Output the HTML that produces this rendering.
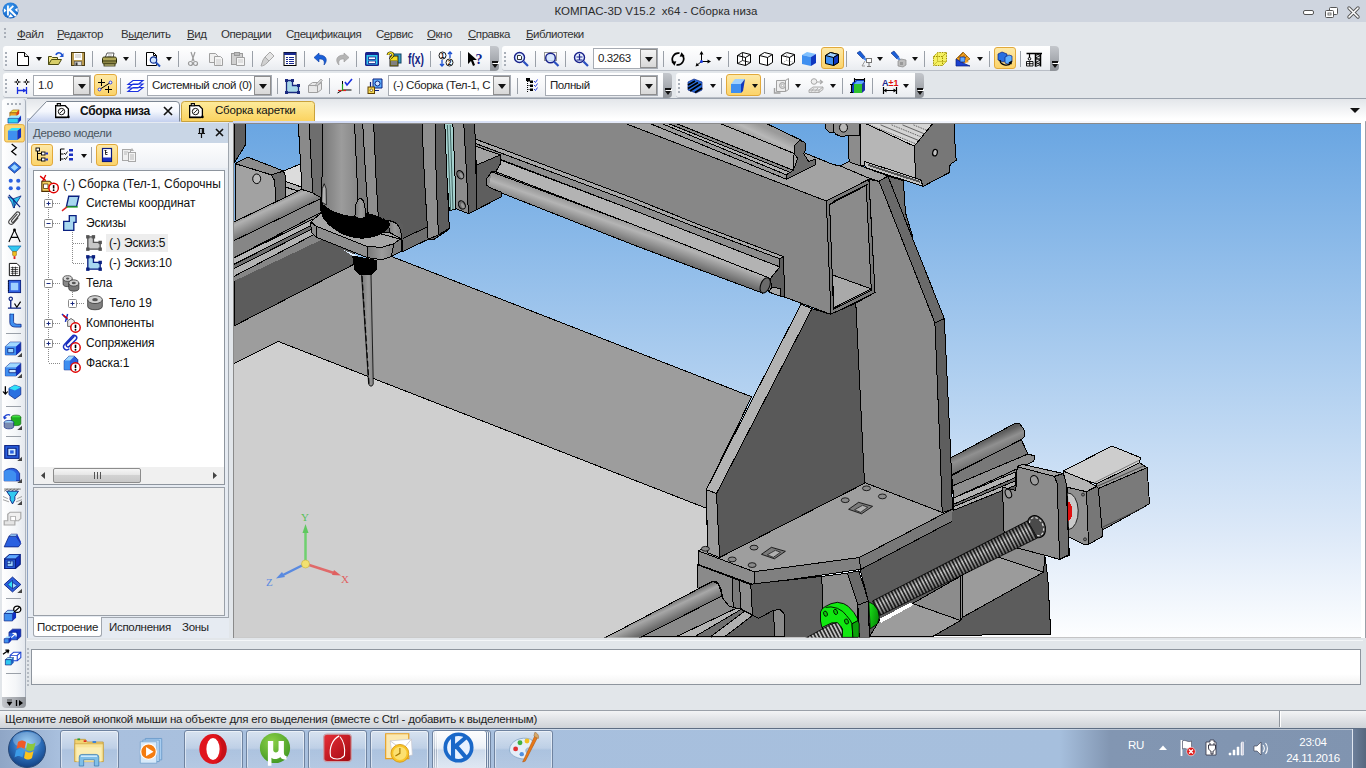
<!DOCTYPE html>
<html lang="ru">
<head>
<meta charset="utf-8">
<title>КОМПАС-3D V15.2 x64 - Сборка низа</title>
<style>
*{box-sizing:border-box;margin:0;padding:0}
html,body{width:1366px;height:768px;overflow:hidden;background:#e2e6ea;font-family:"Liberation Sans","DejaVu Sans",sans-serif;font-size:12px;color:#1a1a1a}
.abs{position:absolute}
#app{position:absolute;left:0;top:0;width:1366px;height:768px;overflow:hidden;background:#e2e6ea}
#title{left:0;top:0;width:1366px;height:22px;background:#cfd5df}
#title .t{left:0;width:1312px;top:5px;text-align:center;font-size:11.5px;color:#2b2b2b;white-space:pre}
#menu{left:0;top:22px;width:1366px;height:24px;background:#e2e6ea}
#menu span{position:absolute;top:6px;font-size:11.5px;color:#333;white-space:nowrap;letter-spacing:-0.45px}
#menu u{text-decoration:underline;text-underline-offset:1px}
.tb{position:absolute;height:25px;background:linear-gradient(#ffffff,#f6f7f9 55%,#e9ecf0);border-radius:3px 0 0 3px;border-bottom:1px solid #b9bec6}
.cap{position:absolute;width:9px;height:25px;background:linear-gradient(#c4c7cc,#8f9399);border-radius:0 4px 4px 0}
.cap:after{content:"";position:absolute;left:2px;top:18px;border:3px solid transparent;border-top:4px solid #111;width:0;height:0}
.cap:before{content:"";position:absolute;left:2px;top:15px;width:6px;height:2px;background:#111;box-shadow:1px 1px 0 #fff}
.grip{position:absolute;width:2px;height:14px;top:6px;background:repeating-linear-gradient(#a9afb8 0 2px,transparent 2px 4px)}
.sep{position:absolute;width:1px;height:16px;top:5px;background:#9aa0a8}
.dd{position:absolute;width:0;height:0;border:3px solid transparent;border-top:4px solid #111;top:11px}
.combo{position:absolute;height:21px;top:2px;background:#fff;border:1px solid #a6abb3;font-size:11.5px;letter-spacing:-.4px;line-height:19px;padding-left:4px;white-space:nowrap;overflow:hidden;color:#222}
.combo i{position:absolute;right:0;top:0;width:17px;height:19px;background:linear-gradient(#f4f4f4,#d8d8d8);border:1px solid #8e8e8e}
.combo i:after{content:"";position:absolute;left:4px;top:7px;border:4px solid transparent;border-top:5px solid #111}
.hl{position:absolute;top:1px;height:22px;background:linear-gradient(#fde9a8,#fbd36a);border:1px solid #e2a93a;border-radius:3px}
svg{position:absolute;overflow:visible}
</style>
</head>
<body>
<div id="app">
<div id="title" class="abs">
<svg style="left:2px;top:2px" width="17" height="17" viewBox="0 0 18 18"><defs><radialGradient id="kg" cx=".45" cy=".35" r=".75"><stop offset="0" stop-color="#3f9df0"/><stop offset=".7" stop-color="#1a6fd0"/><stop offset="1" stop-color="#0d4fa8"/></radialGradient></defs><circle cx="9" cy="9" r="8.500" fill="url(#kg)"/><path d="M6.300 3.800v10.400" stroke="#fff" stroke-width="1.900" fill="none"/><path d="M6.500 9.500L12 4.200" stroke="#fff" stroke-width="1.900" fill="none"/><path d="M8 8.200L14.800 14.800" stroke="#fff" stroke-width="2.300" fill="none"/><path d="M2 6.500L4.800 9L2 11.500zM16.500 6L13.500 8.300L16.500 10.800zM6.500 16.500L9 12.800L11.800 16z" fill="#fff"/></svg>
<div class="abs t">КОМПАС-3D V15.2  x64 - Сборка низа</div>
<svg style="left:1302px;top:7px" width="60" height="12" viewBox="0 0 60 12"><rect x="1.500" y="3.500" width="10" height="4" rx="1.500" fill="#fff" stroke="#555"/><rect x="27.500" y="0.500" width="8" height="7" rx="1" fill="#fff" stroke="#555"/><rect x="23.500" y="3.500" width="8" height="7" rx="1" fill="#fff" stroke="#555"/><rect x="26" y="6" width="3" height="2" fill="none" stroke="#555" stroke-width=".8"/><path d="M47 1l9 9M56 1l-9 9" stroke="#555" stroke-width="3.400" stroke-linecap="round"/><path d="M47 1l9 9M56 1l-9 9" stroke="#fff" stroke-width="1.600" stroke-linecap="round"/></svg>
</div>
<div id="menu" class="abs">
<div class="grip" style="left:4px;top:6px;height:10px"></div>
<span style="left:17px"><u>Ф</u>айл</span>
<span style="left:57px"><u>Р</u>едактор</span>
<span style="left:121px">В<u>ы</u>делить</span>
<span style="left:187px"><u>В</u>ид</span>
<span style="left:221px">Опера<u>ц</u>ии</span>
<span style="left:286px">С<u>п</u>ецификация</span>
<span style="left:376px">С<u>е</u>рвис</span>
<span style="left:427px"><u>О</u>кно</span>
<span style="left:468px"><u>С</u>правка</span>
<span style="left:526px"><u>Б</u>иблиотеки</span>
</div>
<div class="tb" style="left:3px;top:46px;width:487px"></div><div class="cap" style="left:490px;top:46px"></div>
<div class="grip" style="left:5px;top:52px"></div>
<svg style="left:15px;top:51px" width="16" height="16" viewBox="0 0 16 16"><path d="M2.5 1.5h7l4 4v9h-11z" fill="#fff" stroke="#000"/><path d="M9.5 1.5v4h4" fill="#e8e8e8" stroke="#000"/></svg>
<div class="dd" style="left:36px;top:57px"></div>
<svg style="left:47px;top:51px" width="16" height="16" viewBox="0 0 16 16"><path d="M1.5 13.5v-8h3l1 1h5v2" fill="#f4e88c" stroke="#4a4a10"/><path d="M1.5 13.5l3-5h10l-3 5z" fill="#d8cf6a" stroke="#4a4a10"/><path d="M9 4c1-3 5-3 6 0" fill="none" stroke="#1a4fd0" stroke-width="1.6"/><path d="M16.5 2v4h-4z" fill="#1a4fd0"/></svg>
<svg style="left:70px;top:51px" width="16" height="16" viewBox="0 0 16 16"><rect x="1.5" y="1.5" width="13" height="13" fill="#b89a50" stroke="#4a3a10"/><rect x="4" y="2" width="8" height="7" fill="#fff"/><path d="M5 4h6M5 6h6" stroke="#bbb"/><rect x="4.5" y="10.5" width="7" height="4" fill="#ddd" stroke="#555" stroke-width=".6"/><rect x="5.5" y="11.5" width="2" height="3" fill="#333"/></svg>
<div class="sep" style="left:92px;top:51px"></div>
<svg style="left:101px;top:51px" width="16" height="16" viewBox="0 0 16 16"><path d="M4 7l2-5h7l-1 5z" fill="#fff" stroke="#333" stroke-width=".8"/><path d="M7 4h4M6.5 5.5h4" stroke="#999" stroke-width=".7"/><path d="M1.5 7.5c0-1 1-1.5 2-1.5h10c1 0 2 .5 2 1.500v4c0 1-1 1.500-2 1.500h-10c-1 0-2-.5-2-1.500z" fill="#b0a85a" stroke="#2a2a08"/><path d="M2 10h13" stroke="#2a2a08"/><path d="M2 12h13" stroke="#6a6430"/><rect x="3" y="13" width="11" height="2" fill="#d8d08a" stroke="#2a2a08" stroke-width=".8"/></svg>
<div class="dd" style="left:123px;top:57px"></div>
<div class="sep" style="left:135px;top:51px"></div>
<svg style="left:145px;top:51px" width="16" height="16" viewBox="0 0 16 16"><path d="M1.500 1.500h7l3 3v10h-10z" fill="#fff" stroke="#000"/><path d="M8.500 1.500v3h3" fill="none" stroke="#000"/><circle cx="8.500" cy="9" r="3.200" fill="#cfe4ff" stroke="#103090" stroke-width="1.200"/><path d="M11 11.500l4 4" stroke="#2050c0" stroke-width="2"/></svg>
<div class="dd" style="left:166px;top:57px"></div>
<div class="sep" style="left:178px;top:51px"></div>
<svg style="left:185px;top:51px" width="16" height="16" viewBox="0 0 16 16"><path d="M6 1l3 9M10 1l-3 9" stroke="#9a9a9a" stroke-width="1.200" fill="none"/><circle cx="5.500" cy="12.500" r="2" fill="none" stroke="#9a9a9a" stroke-width="1.200"/><circle cx="10.500" cy="12.500" r="2" fill="none" stroke="#9a9a9a" stroke-width="1.200"/></svg>
<svg style="left:208px;top:51px" width="16" height="16" viewBox="0 0 16 16"><path d="M1.500 2.500h6l2 2v7h-8z" fill="#f0f0f0" stroke="#a0a0a0"/><path d="M6.500 5.500h6l2 2v7h-8z" fill="#f4f4f4" stroke="#a0a0a0"/><path d="M8 9h5M8 11h5M8 13h5" stroke="#c0c0c0" stroke-width=".8"/></svg>
<svg style="left:230px;top:51px" width="16" height="16" viewBox="0 0 16 16"><rect x="1.500" y="2.500" width="11" height="11" fill="#d0d0d0" stroke="#9a9a9a"/><rect x="4.500" y="1.500" width="5" height="3" fill="#bbb" stroke="#999"/><path d="M6.500 6.500h8v8h-8z" fill="#f4f4f4" stroke="#a0a0a0"/><path d="M8 9h5M8 11h5" stroke="#c0c0c0" stroke-width=".8"/></svg>
<div class="sep" style="left:252px;top:51px"></div>
<svg style="left:260px;top:51px" width="16" height="16" viewBox="0 0 16 16"><path d="M10 1l4 4-5 5-4-4z" fill="#e4e4e4" stroke="#a8a8a8"/><path d="M5 6l4 4-2 2c-2 2-4 3-6 3 1-2 1-4 2-6z" fill="#d0d0d0" stroke="#a8a8a8"/></svg>
<svg style="left:282px;top:51px" width="16" height="16" viewBox="0 0 16 16"><rect x="2" y="1.500" width="12" height="13" fill="#fff" stroke="#000"/><rect x="2" y="1.500" width="12" height="2.500" fill="#1a2a90"/><path d="M4 6.500h2M7 6.500h5M4 8.500h2M7 8.500h5M4 10.500h2M7 10.500h5M4 12.500h2M7 12.500h5" stroke="#1a2a90" stroke-width="1.200"/></svg>
<div class="sep" style="left:304px;top:51px"></div>
<svg style="left:313px;top:51px" width="16" height="16" viewBox="0 0 16 16"><path d="M6 2l-5 4.500 5 4.500v-3c4 0 6 1 5 6 4-4 3-10-5-10z" fill="#1a5fd8" stroke="#0a3aa0" stroke-width=".6"/></svg>
<svg style="left:334px;top:51px" width="16" height="16" viewBox="0 0 16 16"><path d="M10 2l5 4.500-5 4.500v-3c-4 0-6 1-5 6-4-4-3-10 5-10z" fill="#b4b4b4" stroke="#999" stroke-width=".6"/></svg>
<div class="sep" style="left:356px;top:51px"></div>
<svg style="left:364px;top:51px" width="16" height="16" viewBox="0 0 16 16"><rect x="1" y="1" width="14" height="14" rx="1.500" fill="#18208a"/><rect x="2.500" y="4" width="11" height="9.500" fill="#30c8f0"/><rect x="4.500" y="6" width="7" height="2.500" fill="#fff" stroke="#18208a" stroke-width=".8"/><rect x="4.500" y="10" width="7" height="2.500" fill="#fff" stroke="#18208a" stroke-width=".8"/></svg>
<svg style="left:386px;top:51px" width="16" height="16" viewBox="0 0 16 16"><rect x="7" y="3" width="8" height="9" fill="#38a0c8" stroke="#104060"/><rect x="4" y="5" width="8" height="10" fill="#f4e020" stroke="#222"/><path d="M5 10h6v4h-6zM7 10v4M9 10v4M5 12h6" stroke="#222" fill="#fff" stroke-width=".7"/><path d="M2 4c0-3 5-3 5 0 0 2-2.500 2-2.500 4" fill="none" stroke="#000" stroke-width="2.600"/><path d="M2 4c0-3 5-3 5 0 0 2-2.500 2-2.500 4" fill="none" stroke="#f4e020" stroke-width="1.400"/></svg>
<svg style="left:408px;top:51px" width="16" height="16" viewBox="0 0 16 16"><text x="0" y="13" font-family="Liberation Sans,sans-serif" font-size="14" font-weight="bold" fill="#102080" textLength="16" lengthAdjust="spacingAndGlyphs">f(x)</text></svg>
<div class="sep" style="left:430px;top:51px"></div>
<svg style="left:438px;top:51px" width="16" height="16" viewBox="0 0 16 16"><circle cx="4.500" cy="4.500" r="3.500" fill="#fff" stroke="#000" stroke-width=".9"/><circle cx="11.500" cy="11.500" r="3.500" fill="#fff" stroke="#000" stroke-width=".9"/><text x="2.800" y="7" font-size="6.500" font-family="Liberation Sans,sans-serif" font-weight="bold" fill="#000">1</text><text x="9.800" y="14" font-size="6.500" font-family="Liberation Sans,sans-serif" font-weight="bold" fill="#000">2</text><path d="M12 1v6M10 3l2-2 2 2" stroke="#1a4fd0" stroke-width="1.300" fill="none"/><path d="M4 9v6M2 13l2 2 2-2" stroke="#1a4fd0" stroke-width="1.300" fill="none"/></svg>
<div class="sep" style="left:460px;top:51px"></div>
<svg style="left:467px;top:51px" width="16" height="16" viewBox="0 0 16 16"><path d="M1 1v12l3-3 2 5 2-1-2-5h4z" fill="#000"/><text x="8.500" y="13" font-size="14" font-weight="bold" font-family="Liberation Serif,serif" fill="#10208a">?</text></svg>
<div class="tb" style="left:502px;top:46px;width:548px"></div><div class="cap" style="left:1050px;top:46px"></div>
<div class="grip" style="left:504px;top:52px"></div>
<svg style="left:513px;top:51px" width="16" height="16" viewBox="0 0 16 16"><circle cx="6.500" cy="6.500" r="5" fill="#dcebff" stroke="#18208a" stroke-width="1.400"/><path d="M10.500 10.500l4.500 4.500" stroke="#2a50c0" stroke-width="2.200"/><path d="M4.500 4.500h3l1 1v3h-4z" fill="#fff" stroke="#000" stroke-width=".8"/></svg>
<div class="sep" style="left:535px;top:51px"></div>
<svg style="left:543px;top:51px" width="16" height="16" viewBox="0 0 16 16"><rect x="1.500" y="1.500" width="12" height="8" fill="none" stroke="#333" stroke-dasharray="1 1"/><circle cx="7.500" cy="7" r="4.800" fill="#cfe2ff" fill-opacity=".8" stroke="#18208a" stroke-width="1.400"/><path d="M11 10.500l4.500 4.500" stroke="#2a50c0" stroke-width="2.200"/></svg>
<div class="sep" style="left:565px;top:51px"></div>
<svg style="left:573px;top:51px" width="16" height="16" viewBox="0 0 16 16"><circle cx="6.500" cy="6.500" r="5" fill="#e8f1ff" stroke="#18208a" stroke-width="1.400"/><path d="M10.500 10.500l4.500 4.500" stroke="#2a50c0" stroke-width="2.200"/><path d="M3.500 6h6M6.500 3v6M3.500 9h6" stroke="#18208a" stroke-width="1.200"/></svg>
<div class="combo" style="left:593px;top:48px;width:65px">0.3263<i></i></div>
<div class="sep" style="left:663px;top:51px"></div>
<svg style="left:670px;top:51px" width="16" height="16" viewBox="0 0 16 16"><path d="M9.500 2.200A6 6 0 0 0 3.800 12" fill="none" stroke="#000" stroke-width="1.700"/><path d="M1.300 10.800l5 -.6-1.800 4.600z" fill="#000"/><path d="M6.500 13.800A6 6 0 0 0 12.200 4" fill="none" stroke="#000" stroke-width="1.700"/><path d="M14.700 5.200l-5 .6 1.800-4.600z" fill="#000"/></svg>
<svg style="left:695px;top:51px" width="16" height="16" viewBox="0 0 16 16"><path d="M6.500 1.500v9M6.500 10.500h8M6.500 10.500l-5 4" stroke="#000" stroke-width="1" fill="none"/><path d="M6.500 0l-2 3.500h4zM16 10.500l-3.500-2v4zM0.500 15.500l1.200-3.800 2.300 2.800z" fill="#000"/><circle cx="6.500" cy="10.500" r="1.500" fill="#1a3ae0"/></svg>
<div class="dd" style="left:716px;top:57px"></div>
<div class="sep" style="left:728px;top:51px"></div>
<svg style="left:736px;top:51px" width="16" height="16" viewBox="0 0 16 16"><path d="M1.500 4.500l5-3 8 2v8l-5 3-8-2zM1.500 4.500l8 2 5-3M9.500 6.500v8" fill="#fff" stroke="#000"/><path d="M6.500 1.500v8l-5 3M6.500 9.500l8 2" fill="none" stroke="#000" stroke-width=".8"/></svg>
<svg style="left:758px;top:51px" width="16" height="16" viewBox="0 0 16 16"><path d="M1.500 4.500l5-3 8 2v8l-5 3-8-2zM1.500 4.500l8 2 5-3M9.500 6.500v8" fill="#fff" stroke="#000"/></svg>
<svg style="left:780px;top:51px" width="16" height="16" viewBox="0 0 16 16"><path d="M1.500 4.500l5-3 8 2v8l-5 3-8-2zM1.500 4.500l8 2 5-3M9.500 6.500v8" fill="#fff" stroke="#000"/><path d="M6.500 1.500v8l-5 3M6.500 9.500l8 2" fill="none" stroke="#888" stroke-width=".8" stroke-dasharray="1 1"/></svg>
<svg style="left:801px;top:51px" width="16" height="16" viewBox="0 0 16 16"><path d="M1 4l5-3 9 2-5 3z" fill="#7fc0ff"/><path d="M1 4l9 2v9l-9-2z" fill="#3f8ff0"/><path d="M10 6l5-3v9l-5 3z" fill="#1038c0"/></svg>
<div class="hl" style="left:821px;top:47px;width:23px"></div>
<svg style="left:824px;top:51px" width="16" height="16" viewBox="0 0 16 16"><path d="M1.500 4.500l5-3 8 2v8l-5 3-8-2z" fill="#3f8ff0" stroke="#000"/><path d="M1.500 4.500l5-3 8 2-5 3z" fill="#9fd0ff" stroke="#000"/><path d="M9.500 6.500l5-3v8l-5 3z" fill="#1038c0" stroke="#000"/></svg>
<div class="sep" style="left:846px;top:51px"></div>
<svg style="left:856px;top:51px" width="16" height="16" viewBox="0 0 16 16"><path d="M1 2l3-2 5 6-2 2z" fill="#1a5fd8" stroke="#0a2a80" stroke-width=".6"/><path d="M7 8l2-2 2 3-1 1z" fill="#4a8af0"/><path d="M9 10l-3 5M6 15h3" stroke="#999" fill="none"/><rect x="10.500" y="7.500" width="5" height="4" fill="#fff" stroke="#777"/><path d="M13 11.500v4M11 15.500h4" stroke="#777"/></svg>
<div class="dd" style="left:877px;top:57px"></div>
<svg style="left:890px;top:51px" width="16" height="16" viewBox="0 0 16 16"><path d="M1 2l3-2 5 6-2 2z" fill="#1a5fd8" stroke="#0a2a80" stroke-width=".6"/><path d="M7 8l2-2 2 3-1 1z" fill="#4a8af0"/><path d="M8 10l3-2 5 1v5l-3 2-5-1z" fill="#bdbdbd" stroke="#888" stroke-width=".7"/><rect x="10" y="11" width="3" height="3" fill="#999"/></svg>
<div class="dd" style="left:912px;top:57px"></div>
<div class="sep" style="left:924px;top:51px"></div>
<svg style="left:932px;top:51px" width="16" height="16" viewBox="0 0 16 16"><path d="M1.500 5.500l4-4h9v9l-4 4h-9z" fill="#f4f060" stroke="#a09000" stroke-dasharray="1.500 1"/><path d="M1.500 5.500h9v9M10.500 5.500l4-4" fill="none" stroke="#a09000" stroke-dasharray="1.500 1"/><path d="M5.500 1.500v9h9M5.500 10.500l-4 4" fill="none" stroke="#c0b020" stroke-width=".7"/></svg>
<svg style="left:955px;top:51px" width="16" height="16" viewBox="0 0 16 16"><path d="M1 8l7-7 7 7-7 4z" fill="#f0a020" stroke="#805000" stroke-width=".7"/><path d="M3 7l5-5M5 8.500l5-5M7 10l5-5" stroke="#a86000" stroke-width=".8"/><path d="M1 8v7h14l-7-3z" fill="#1a40d0" stroke="#0a2080" stroke-width=".7"/><path d="M5 6h5v5h-5z" fill="#5fa8ff" stroke="#0a2080" stroke-width=".7"/><path d="M10 8.500l4 2.500-4 1z" fill="#f0a020"/></svg>
<div class="dd" style="left:977px;top:57px"></div>
<div class="sep" style="left:989px;top:51px"></div>
<div class="hl" style="left:994px;top:47px;width:22px"></div>
<svg style="left:997px;top:51px" width="16" height="16" viewBox="0 0 16 16"><path d="M1 3l4-2 5 2v6l-4 2-5-2z" fill="#2a70e0" stroke="#0a2080" stroke-width=".7"/><path d="M8 6l4-2 3 1v6l-4 2-3-1z" fill="#5fb0ff" stroke="#0a2080" stroke-width=".7"/><path d="M3 9c0 5 8 7 11 3" fill="none" stroke="#000" stroke-width="1.300"/><path d="M15 9.500l-.500 4-3-2z" fill="#000"/></svg>
<div class="sep" style="left:1020px;top:51px"></div>
<svg style="left:1026px;top:51px" width="16" height="16" viewBox="0 0 16 16"><path d="M0.500 2.500h15.500M9.500 2.500v13M14.500 2.500v13" stroke="#000" stroke-width="1.500" fill="none"/><path d="M9.500 2.500l5 2.200-5 2.200 5 2.200-5 2.200 5 2.200-5 2" stroke="#000" stroke-width=".9" fill="none"/><path d="M9.500 4.700l5-2.200M9.500 9.100l5-2.200M9.500 13.500l5-2.200" stroke="#000" stroke-width=".7"/><path d="M3.500 2.500v4" stroke="#000" stroke-width="1.200"/><circle cx="3.500" cy="7.800" r="1.300" fill="none" stroke="#000"/><path d="M0.500 10.500h6.500v4.500h-6.500zM3.700 10.500v4.500M0.500 12.700h6.500" fill="#fff" stroke="#000" stroke-width=".9"/></svg>
<div class="tb" style="left:3px;top:73px;width:660px"></div><div class="cap" style="left:663px;top:73px"></div>
<div class="grip" style="left:5px;top:79px"></div>
<svg style="left:14px;top:78px" width="16" height="16" viewBox="0 0 16 16"><path d="M3.500 1v6M0.500 4h6M12.500 1v6M9.500 4h6" stroke="#000" stroke-width="1"/><circle cx="3.500" cy="4" r="1.200" fill="#fff" stroke="#000" stroke-width=".8"/><circle cx="12.500" cy="4" r="1.200" fill="#fff" stroke="#000" stroke-width=".8"/><path d="M3.500 9v7M12.500 9v7M3.500 12.500h9" stroke="#1a30e0" stroke-width="1.300"/><path d="M12.500 12.500l-3.500-2v4z" fill="#1a30e0"/></svg>
<div class="combo" style="left:33px;top:75px;width:58px">1.0<i></i></div>
<div class="hl" style="left:94px;top:74px;width:23px"></div>
<svg style="left:97px;top:78px" width="16" height="16" viewBox="0 0 16 16"><path d="M4.500 1v7M1 4.500h7M11.500 8v7M8 11.500h7" stroke="#000" stroke-width="1"/><path d="M2.500 11.500l11-7" stroke="#000" stroke-width="1"/><circle cx="2.500" cy="11.500" r="1.400" fill="#fff" stroke="#1a30e0" stroke-width=".9"/><circle cx="13.500" cy="4.500" r="1.400" fill="#fff" stroke="#1a30e0" stroke-width=".9"/></svg>
<div class="sep" style="left:120px;top:78px"></div>
<svg style="left:127px;top:78px" width="16" height="16" viewBox="0 0 16 16"><path d="M1 6.500l5-4h10l-5 4zM1 10l5-4h10l-5 4zM1 13.500l5-4h10l-5 4z" fill="#fff" stroke="#1a30e0" stroke-width="1.100"/></svg>
<div class="combo" style="left:147px;top:75px;width:125px">Системный слой (0)<i></i></div>
<div class="sep" style="left:277px;top:78px"></div>
<svg style="left:284px;top:78px" width="16" height="16" viewBox="0 0 16 16"><path d="M2.500 2.500h6v5h6v7h-12z" fill="#a8d8e8" stroke="#1a2a80" stroke-width="1.300"/><rect x="1" y="1" width="3" height="3" fill="#1a2a80"/><rect x="1" y="13" width="3" height="3" fill="#1a2a80"/><rect x="13" y="13" width="3" height="3" fill="#1a2a80"/><rect x="13" y="6" width="3" height="3" fill="#1a2a80"/><rect x="7" y="1" width="3" height="3" fill="#1a2a80"/></svg>
<svg style="left:307px;top:78px" width="16" height="16" viewBox="0 0 16 16"><path d="M1.500 7.500l4-3h9v7l-4 3h-9zM1.500 7.500h9v7M10.500 7.500l4-3" fill="#e8e8e8" stroke="#a0a0a0"/><path d="M9 6l5-5 1.500 1.500-5 5-2 .5z" fill="#d0d0d0" stroke="#999" stroke-width=".7"/></svg>
<div class="sep" style="left:329px;top:78px"></div>
<svg style="left:337px;top:78px" width="16" height="16" viewBox="0 0 16 16"><path d="M5.500 3v9M5.500 12h9M5.500 12l-5 3" stroke="#000" stroke-width="1" fill="none"/><path d="M1 12.500h8" stroke="#e02020" stroke-width="1.200"/><path d="M5.500 6v7" stroke="#20a020" stroke-width="1.200"/><path d="M8 4l2 3 5-6" stroke="#1a30e0" stroke-width="1.600" fill="none"/></svg>
<div class="sep" style="left:359px;top:78px"></div>
<svg style="left:367px;top:78px" width="16" height="16" viewBox="0 0 16 16"><path d="M6 1h9v9h-9z" fill="#5fb0ff" stroke="#0a2080"/><circle cx="10.500" cy="5.500" r="2.500" fill="#cfe4ff" stroke="#0a2080"/><path d="M3.500 4v8.500h8.500" fill="none" stroke="#0a2080" stroke-width="1.200"/><rect x="1" y="9" width="6.500" height="6.500" fill="#f4d850" stroke="#604000"/><circle cx="4.300" cy="12.300" r="1.300" fill="#fff" stroke="#604000" stroke-width=".7"/></svg>
<div class="combo" style="left:388px;top:75px;width:123px">(-) Сборка (Тел-1, С<i></i></div>
<div class="sep" style="left:517px;top:78px"></div>
<svg style="left:525px;top:78px" width="16" height="16" viewBox="0 0 16 16"><path d="M2.500 1v14M2.500 3.500h4M2.500 7.500h4M2.500 11.500h4" stroke="#000" stroke-width="1" fill="none" stroke-dasharray="1 1"/><rect x="1" y="0" width="4" height="3" fill="#000"/><rect x="5" y="2.500" width="3" height="2.500" fill="#000"/><rect x="5" y="6.500" width="3" height="2.500" fill="#000"/><rect x="5" y="10.500" width="3" height="2.500" fill="#000"/><path d="M9 3l1.500 1.500 2-3M9 7l1.500 1.500 2-3M9 11l1.500 1.500 2-3" stroke="#1a30e0" fill="none" stroke-width=".9"/></svg>
<div class="combo" style="left:545px;top:75px;width:113px">Полный<i></i></div>
<div class="tb" style="left:676px;top:73px;width:239px"></div><div class="cap" style="left:915px;top:73px"></div>
<div class="grip" style="left:678px;top:79px"></div>
<svg style="left:687px;top:78px" width="16" height="16" viewBox="0 0 16 16"><path d="M1 4l6-3 8 3v8l-6 3-8-3z" fill="#2a70e0" stroke="#0a2080" stroke-width=".7"/><path d="M1 7l7-4M1 10.500l10-6M3 13l11-7M8 14.500l7-4.500" stroke="#000" stroke-width="1.800"/></svg>
<div class="dd" style="left:710px;top:84px"></div>
<div class="sep" style="left:721px;top:78px"></div>
<div class="hl" style="left:726px;top:74px;width:35px"></div>
<svg style="left:730px;top:78px" width="16" height="16" viewBox="0 0 16 16"><path d="M1 6h10v9h-10z" fill="#3f8ff0"/><path d="M1 6l4-5h10l-4 5z" fill="#9fd0ff"/><path d="M11 6l4-5-2 12-2 2z" fill="#1038c0"/></svg>
<div class="dd" style="left:752px;top:84px"></div>
<div class="sep" style="left:764px;top:78px"></div>
<svg style="left:774px;top:78px" width="16" height="16" viewBox="0 0 16 16"><path d="M2.500 2.500h9l3-2M2.500 2.500v11h9v-11M11.500 13.500l3-2v-11" fill="#eee" stroke="#a0a0a0"/><circle cx="8.500" cy="7.500" r="3" fill="#ddd" stroke="#a0a0a0"/><circle cx="8.500" cy="7.500" r="1.200" fill="#fff" stroke="#a0a0a0" stroke-width=".7"/><path d="M0.500 10v5h6" stroke="#a0a0a0" fill="none" stroke-width="1.400"/></svg>
<div class="dd" style="left:795px;top:84px"></div>
<svg style="left:808px;top:78px" width="16" height="16" viewBox="0 0 16 16"><circle cx="6" cy="3.500" r="2.800" fill="#eee" stroke="#a8a8a8"/><path d="M9 4h5M12 2l2.500 2-2.500 2" stroke="#a8a8a8" fill="none" stroke-width="1.100"/><path d="M1 12l4-3h10l-4 3zM1 12v2.500h10l4-3v-2.500M11 12v2.500M5.500 10.500l-2 3M10 10l-3 3.500" fill="#e4e4e4" stroke="#a8a8a8" stroke-width=".9"/></svg>
<div class="dd" style="left:830px;top:84px"></div>
<div class="sep" style="left:842px;top:78px"></div>
<svg style="left:850px;top:78px" width="16" height="16" viewBox="0 0 16 16"><path d="M2 5l4-3h9v10l-4 3h-9z" fill="#1038c0"/><rect x="4" y="6" width="8" height="9" fill="#30c030"/><path d="M12 6l3-3v9l-3 3z" fill="#1a30a0"/><path d="M4 6l3-3h8l-3 3z" fill="#5fa8ff"/><path d="M4.500 0v4M14.500 0v4M4.500 1.500h10" stroke="#000" stroke-width="1.100"/><path d="M1.500 6v9M0 6.500h3M0 14.500h3" stroke="#000" stroke-width="1.100"/></svg>
<div class="sep" style="left:872px;top:78px"></div>
<svg style="left:882px;top:78px" width="16" height="16" viewBox="0 0 16 16"><text x="0" y="7.500" font-size="9" font-weight="bold" font-family="Liberation Sans,sans-serif" fill="#1a2a90">A</text><text x="6.500" y="7.500" font-size="9" font-weight="bold" font-family="Liberation Sans,sans-serif" fill="#e01010">±1</text><path d="M1.500 9v7M14.500 9v7M1.500 12.500h13" stroke="#000" stroke-width="1.200"/><path d="M1.500 12.500l3-2v4zM14.500 12.500l-3-2v4z" fill="#000"/></svg>
<div class="dd" style="left:903px;top:84px"></div>
<div class="abs" style="left:27px;top:98px;width:1339px;height:24px;background:linear-gradient(#e3e6ea,#fff 90%);border-top:1px solid #9aa2ad;border-bottom:1px solid #a8aeb6"></div>
<div class="abs" style="left:27px;top:118px;width:207px;height:5px;background:#c6d2ef"></div>
<svg style="left:27px;top:100px" width="300" height="22" viewBox="0 0 300 22">
<defs><linearGradient id="t1" x1="0" y1="0" x2="0" y2="1"><stop offset="0" stop-color="#ffffff"/><stop offset=".5" stop-color="#f3f6fd"/><stop offset="1" stop-color="#c6d2ef"/></linearGradient>
<linearGradient id="t2" x1="0" y1="0" x2="0" y2="1"><stop offset="0" stop-color="#fdeb9c"/><stop offset="1" stop-color="#fbd25e"/></linearGradient></defs>
<path d="M154.500 21.500v-17q0-3 3-3h127q3 0 3 3v17z" fill="url(#t2)" stroke="#c9a23c"/>
<path d="M0 21.500L19 1.500h130q3.500 0 3.500 3.500v16.500z" fill="url(#t1)"/>
<path d="M0.500 21.500L19.500 1.500h129.500q3.500 0 3.500 3.500v16.500" fill="none" stroke="#7d8794"/>
</svg>
<svg style="left:53px;top:102px" width="17" height="17" viewBox="0 0 16 16"><path d="M2.500 3.500h9l3 3v8h-12z" fill="#fff" stroke="#000" stroke-width="1.200"/><path d="M4 1.500h3v2h-3z" fill="#fff" stroke="#000"/><circle cx="8" cy="9" r="3" fill="#fff" stroke="#000" stroke-width=".9"/><path d="M6.500 10.500l3-3" stroke="#000" stroke-width=".8"/><circle cx="14.500" cy="14" r="1.200" fill="#000"/><path d="M2 14.500h11" stroke="#000" stroke-width="1.500"/></svg>
<svg style="left:187px;top:102px" width="17" height="17" viewBox="0 0 16 16"><path d="M2.500 3.500h9l3 3v8h-12z" fill="#fff" stroke="#000" stroke-width="1.200"/><path d="M4 1.500h3v2h-3z" fill="#fff" stroke="#000"/><circle cx="8" cy="9" r="3" fill="#fff" stroke="#000" stroke-width=".9"/><path d="M6.500 10.500l3-3" stroke="#000" stroke-width=".8"/><circle cx="14.500" cy="14" r="1.200" fill="#000"/><path d="M2 14.500h11" stroke="#000" stroke-width="1.500"/></svg>
<div class="abs" style="left:80px;top:104px;font-weight:bold;font-size:12px;letter-spacing:-.35px;color:#111;white-space:nowrap">Сборка низа</div>
<svg style="left:163px;top:106px" width="10" height="10" viewBox="0 0 10 10"><path d="M1 1l8 8M9 1l-8 8" stroke="#111" stroke-width="1.700"/></svg>
<div class="abs" style="left:215px;top:104px;font-size:11.500px;letter-spacing:-.2px;color:#111;white-space:nowrap">Сборка каретки</div>
<div class="abs" style="left:1350px;top:108px;width:0;height:0;border:5px solid transparent;border-top:5px solid #111"></div>
<div class="abs" style="left:2px;top:99px;width:24px;height:599px;background:linear-gradient(90deg,#fff,#f4f6f8 60%,#e4e8ee);border-radius:3px 3px 0 0;border-right:1px solid #aab2bd"></div>
<div class="abs" style="left:2px;top:697px;width:24px;height:11px;background:linear-gradient(90deg,#c4c7cc,#8f9399);border-radius:0 0 4px 4px"></div>
<svg style="left:5px;top:699px" width="20" height="8" viewBox="0 0 20 8"><path d="M2 1h5M2 3h5l-2.500 3.500z" fill="#000" stroke="#000" stroke-width=".6"/><path d="M11.500 1v6" stroke="#000" stroke-width="1.300"/><path d="M14 1v6l4-3z" fill="#000"/></svg>
<div class="abs" style="left:7px;top:103px;width:14px;height:2px;background:repeating-linear-gradient(90deg,#a9afb8 0 2px,transparent 2px 4px)"></div>
<svg style="left:7px;top:109px" width="15" height="15" viewBox="0 0 16 16"><path d="M3 4l3-3h7l-3 3z" fill="#f8e040" stroke="#805000" stroke-width=".6"/><path d="M3 4h7v4h-7z" fill="#f0a020" stroke="#805000" stroke-width=".6"/><path d="M10 4l3-3v4l-3 3z" fill="#e04010"/><path d="M1 10l3-3h11l-3 3z" fill="#9fe8ff"/><path d="M1 10h11v5h-11z" fill="#30d0f0" stroke="#0a2080" stroke-width=".6"/><path d="M12 10l3-3v5l-3 3z" fill="#1030c0"/></svg>
<svg style="left:7px;top:126px" width="15" height="15" viewBox="0 0 16 16"><rect x="-2.500" y="-1.500" width="21" height="18.500" rx="2" fill="#fbd873" stroke="#e2a93a"/><path d="M1 5l4-3h10l-4 3z" fill="#30e0f8"/><path d="M1 5h10v10h-10z" fill="#3f8ff0"/><path d="M11 5l4-3v10l-4 3z" fill="#1030c0"/></svg>
<svg style="left:7px;top:143px" width="15" height="15" viewBox="0 0 16 16"><path d="M5 1l5 4-5 4 5 4" fill="none" stroke="#000" stroke-width="1.300"/></svg>
<svg style="left:7px;top:160px" width="15" height="15" viewBox="0 0 16 16"><path d="M1 8l7-6 7 6-7 6z" fill="#2a70e0" stroke="#0a2080" stroke-width=".7"/><path d="M4 8l4-3.500 4 3.500-4 3.500z" fill="#9fd8ff"/></svg>
<svg style="left:7px;top:177px" width="15" height="15" viewBox="0 0 16 16"><circle cx="4" cy="4" r="2.200" fill="#2a60e0"/><circle cx="12" cy="4" r="2.200" fill="#2a60e0"/><circle cx="4" cy="12" r="2.200" fill="#2a60e0"/><circle cx="12" cy="12" r="2.200" fill="#2a60e0"/></svg>
<svg style="left:7px;top:194px" width="15" height="15" viewBox="0 0 16 16"><path d="M1 3l6 2 8-3-5 8-3 5-2-6z" fill="#30c8f0" stroke="#0a2080" stroke-width=".8"/><path d="M2 1l12 13" stroke="#0a2080" stroke-width="1.300"/><path d="M7 5l1 10" stroke="#0a2080"/></svg>
<svg style="left:7px;top:211px" width="15" height="15" viewBox="0 0 16 16"><path d="M11 3l-6 7c-1 1.500 1 3 2 1.500l6-7c2-2.500-1.500-5-3.500-2.500l-7 8c-2.500 3 2 6 4.500 3l5-6" fill="none" stroke="#444" stroke-width="1.200"/></svg>
<svg style="left:7px;top:228px" width="15" height="15" viewBox="0 0 16 16"><path d="M8 2l-6 13M8 2l6 13M4 10l8 0" fill="none" stroke="#000" stroke-width="1.200"/><circle cx="8" cy="2" r="1.500" fill="#000"/></svg>
<svg style="left:7px;top:245px" width="15" height="15" viewBox="0 0 16 16"><path d="M1 1h14l-5 6h-4z" fill="#30c8f0" stroke="#0a60a0" stroke-width=".7"/><path d="M6 7h4v4l-2 1-2-1z" fill="#f0c020" stroke="#906000" stroke-width=".6"/><path d="M7 12h2v3h-2z" fill="#e02020"/></svg>
<svg style="left:7px;top:262px" width="15" height="15" viewBox="0 0 16 16"><path d="M2.500 1.500h8l3 3v10h-11z" fill="#fff" stroke="#000"/><path d="M4 6h8M4 8h8M4 10h8M4 12h8M6 5v9M9 5v9" stroke="#000" stroke-width=".7"/></svg>
<svg style="left:7px;top:279px" width="15" height="15" viewBox="0 0 16 16"><rect x="1.500" y="1.500" width="13" height="13" fill="#3060e0" stroke="#0a2080"/><rect x="4" y="4" width="8" height="8" fill="#9fd0ff"/><path d="M1.500 2v12" stroke="#000" stroke-dasharray="1 1"/></svg>
<svg style="left:7px;top:296px" width="15" height="15" viewBox="0 0 16 16"><circle cx="4" cy="3" r="1.800" fill="none" stroke="#0a2080" stroke-width="1.200"/><path d="M4 5v8M1 13h14" stroke="#0a2080" stroke-width="1.400" fill="none"/><path d="M8 8l2.500 4 4-6" stroke="#000" stroke-width="1.300" fill="none"/></svg>
<svg style="left:7px;top:313px" width="15" height="15" viewBox="0 0 16 16"><path d="M3 1h4v8c0 2 2 3 4 3h4v3h-6c-4 0-6-2-6-5z" fill="#3f8ff0" stroke="#0a2080" stroke-width=".8"/><path d="M3 1l2-1h3l-1 1z" fill="#9fd8ff"/></svg>
<div class="abs" style="left:6px;top:333px;width:15px;height:1px;background:#9aa0a8"></div>
<svg style="left:3px;top:340px" width="19" height="17" viewBox="0 0 16 16" preserveAspectRatio="none"><path d="M2 6l4-4h9v8l-4 4h-9z" fill="#1030c0" stroke="#0a2080" stroke-width=".6"/><path d="M2 6h9v8h-9z" fill="#3f8ff0"/><path d="M2 6l4-4h9l-4 4z" fill="#9fd8ff"/><path d="M4 8h5v4h-5z" fill="#9fd8ff" stroke="#0a2080" stroke-width=".7"/><path d="M16 16h-4l4-4z" fill="#444"/></svg>
<svg style="left:3px;top:361px" width="19" height="17" viewBox="0 0 16 16" preserveAspectRatio="none"><path d="M2 6l4-4h9v8l-4 4h-9z" fill="#1030c0" stroke="#0a2080" stroke-width=".6"/><path d="M2 6h9v8h-9z" fill="#3f8ff0"/><path d="M2 6l4-4h9l-4 4z" fill="#9fd8ff"/><path d="M5 8h6v3h-6z" fill="#cfeaff" stroke="#0a2080" stroke-width=".7"/><path d="M16 16h-4l4-4z" fill="#444"/></svg>
<svg style="left:3px;top:383px" width="19" height="17" viewBox="0 0 16 16" preserveAspectRatio="none"><path d="M2 3v7M0 8l2 2.500 2-2.500" stroke="#000" fill="none" stroke-width="1.100"/><path d="M5 5l5-3 5 2v7l-5 4-5-4z" fill="#2a70e0" stroke="#0a2080" stroke-width=".6"/><path d="M5 5l5-3 5 2-5 3z" fill="#30e0f8"/></svg>
<div class="abs" style="left:6px;top:406px;width:15px;height:1px;background:#9aa0a8"></div>
<svg style="left:3px;top:413px" width="19" height="17" viewBox="0 0 16 16" preserveAspectRatio="none"><ellipse cx="11" cy="4" rx="4" ry="2" fill="#40e040" stroke="#106010" stroke-width=".6"/><path d="M7 4v6c0 2.500 8 2.500 8 0v-6" fill="#20b020" stroke="#106010" stroke-width=".6"/><ellipse cx="5" cy="9" rx="4" ry="2" fill="#9fd8ff" stroke="#0a2080" stroke-width=".6"/><path d="M1 9v4c0 2.500 8 2.500 8 0v-4" fill="#7a8ab0" stroke="#0a2080" stroke-width=".6"/><path d="M1 5c0-3 3-4 5-3" fill="none" stroke="#1a40d0" stroke-width="1.100"/><path d="M0 3l1 3 2.500-1.500z" fill="#1a40d0"/><path d="M16 16h-4l4-4z" fill="#444"/></svg>
<div class="abs" style="left:6px;top:436px;width:15px;height:1px;background:#9aa0a8"></div>
<svg style="left:3px;top:444px" width="19" height="17" viewBox="0 0 16 16" preserveAspectRatio="none"><rect x="1.500" y="1.500" width="12" height="12" fill="#2a60e0" stroke="#0a2080"/><rect x="4" y="4" width="7" height="7" fill="#cfeaff" stroke="#0a2080"/><rect x="6" y="6" width="3" height="3" fill="#2a60e0"/><path d="M16 16h-4l4-4z" fill="#444"/></svg>
<svg style="left:3px;top:466px" width="19" height="17" viewBox="0 0 16 16" preserveAspectRatio="none"><path d="M1 14v-9c2-3 8-4 11-1l2 3v7z" fill="#2a60e0" stroke="#0a2080" stroke-width=".7"/><path d="M1 5c3-2 8-2 10 2v7h-10z" fill="#3f8ff0"/><path d="M16 16h-4l4-4z" fill="#444"/></svg>
<svg style="left:3px;top:488px" width="19" height="17" viewBox="0 0 16 16" preserveAspectRatio="none"><path d="M1 1h14M1 3l3-2M4 3l3-2M7 3l3-2M10 3l3-2" stroke="#666" stroke-width=".8"/><path d="M3 3h10l-3 5v3l-2 4-2-4v-3z" fill="#30c8f0" stroke="#0a2080" stroke-width=".8"/><path d="M0 8l4 2M0 11l5 2M16 8l-4 2M16 11l-5 2" stroke="#888" stroke-width=".7"/><path d="M16 16h-4l4-4z" fill="#444"/></svg>
<svg style="left:3px;top:509px" width="19" height="17" viewBox="0 0 16 16" preserveAspectRatio="none"><path d="M4 5h9v6h-3v4h-9v-4h3z" fill="#e4e4e4" stroke="#a8a8a8"/><path d="M4 5l2-2h9v6l-2 2" fill="#f0f0f0" stroke="#a8a8a8"/><rect x="6.500" y="7" width="4" height="4" fill="#fff" stroke="#a8a8a8" stroke-width=".7"/></svg>
<svg style="left:3px;top:532px" width="19" height="17" viewBox="0 0 16 16" preserveAspectRatio="none"><path d="M1 14l4-10h6l4 7-2 3z" fill="#2a60e0" stroke="#0a2080" stroke-width=".7"/><path d="M5 4l2-2h5l-1 2z" fill="#9fd8ff" stroke="#0a2080" stroke-width=".5"/><path d="M11 4l1-2 3 7v2z" fill="#1030c0"/></svg>
<svg style="left:3px;top:553px" width="19" height="17" viewBox="0 0 16 16" preserveAspectRatio="none"><path d="M1.500 5.500l4-4h9v9l-4 4h-9z" fill="#1030c0" stroke="#0a2080"/><path d="M1.500 5.500h9v9h-9z" fill="#2a60e0" stroke="#0a2080"/><path d="M1.500 5.500l4-4h9l-4 4z" fill="#5fa8ff" stroke="#0a2080" stroke-width=".6"/><rect x="3.500" y="7.500" width="5" height="5" fill="#9fd8ff" stroke="#0a2080" stroke-width=".7"/><path d="M3.500 10h3v-2.500" stroke="#0a2080" fill="none" stroke-width=".7"/></svg>
<svg style="left:3px;top:576px" width="19" height="17" viewBox="0 0 16 16" preserveAspectRatio="none"><path d="M1 8l7-7 7 7-7 7z" fill="#2a60e0" stroke="#0a2080" stroke-width=".8"/><path d="M4 8l4-4v8z" fill="#30e0f8" stroke="#0a2080" stroke-width=".6"/><path d="M8 6l4 3-4 3z" fill="#9fd8ff" stroke="#0a2080" stroke-width=".6"/><path d="M16 16h-4l4-4z" fill="#444"/></svg>
<div class="abs" style="left:6px;top:598px;width:15px;height:1px;background:#9aa0a8"></div>
<svg style="left:3px;top:605px" width="19" height="17" viewBox="0 0 16 16" preserveAspectRatio="none"><path d="M1 8l3-3h7l-3 3z" fill="#9fd8ff" stroke="#0a2080" stroke-width=".6"/><path d="M1 8h7v7h-7z" fill="#3f8ff0" stroke="#0a2080" stroke-width=".6"/><path d="M8 8l3-3v7l-3 3z" fill="#1030c0"/><circle cx="12" cy="4" r="3" fill="#fff" stroke="#000" stroke-width="1.100"/><path d="M10 6l4-4" stroke="#000" stroke-width="1.100"/></svg>
<svg style="left:3px;top:627px" width="19" height="17" viewBox="0 0 16 16" preserveAspectRatio="none"><path d="M5 5l3-3h7v7l-3 3z" fill="#1030c0" stroke="#0a2080" stroke-width=".6"/><path d="M5 5h7v7h-7z" fill="#2a60e0" stroke="#0a2080" stroke-width=".6"/><path d="M1 11l2-2h4l-2 2z" fill="#9fd8ff"/><path d="M1 11h4v4h-4z" fill="#3f8ff0" stroke="#0a2080" stroke-width=".6"/><path d="M5 11l2-2v4l-2 2z" fill="#1030c0"/><path d="M7 10l4-4M11 6v3M11 6h-3" stroke="#fff" stroke-width="1" fill="none"/></svg>
<svg style="left:3px;top:649px" width="19" height="17" viewBox="0 0 16 16" preserveAspectRatio="none"><path d="M6 6l3-3h6v5l-3 3h-6z" fill="#fff" stroke="#1a40d0" stroke-width=".9"/><path d="M6 6h6v5M12 6l3-3" fill="none" stroke="#1a40d0" stroke-width=".9"/><path d="M2 10l2-2h5l-2 2z" fill="#9fe8ff" stroke="#0a2080" stroke-width=".5"/><path d="M2 10h5v5h-5z" fill="#30c8f0" stroke="#0a2080" stroke-width=".6"/><path d="M7 10l2-2v5l-2 2z" fill="#1a60c0"/><path d="M0 5l5-4M5 1l-1 3M5 1l-3 0" stroke="#000" stroke-width="1.100" fill="none"/></svg>
<div class="abs" style="left:6px;top:673px;width:15px;height:1px;background:#9aa0a8"></div>
<div class="abs" style="left:27px;top:122px;width:202px;height:516px;background:#e6ebf2;border-left:1px solid #8fa4c4"></div>
<div class="abs" style="left:28px;top:123px;width:201px;height:20px;background:#c9d6e6"></div>
<div class="abs" style="left:33px;top:127px;font-size:11.500px;letter-spacing:-.3px;color:#4a5560;white-space:nowrap">Дерево модели</div>
<svg style="left:196px;top:127px" width="30" height="12" viewBox="0 0 30 12"><path d="M3.500 1.500h4v5h-4zM2 6.500h7M5.500 6.500v4.500" fill="none" stroke="#111" stroke-width="1.200"/><path d="M6.500 1.500v5" stroke="#111" stroke-width="1.500"/><path d="M20 2l7 7M27 2l-7 7" stroke="#111" stroke-width="1.600"/></svg>
<div class="abs" style="left:28px;top:143px;width:201px;height:25px;background:linear-gradient(#fdfdfe,#eef1f5)"></div>
<div class="hl" style="left:31px;top:144px;width:22px;height:22px"></div>
<svg style="left:34px;top:147px" width="16" height="16" viewBox="0 0 16 16"><path d="M3.500 2v11h4M3.500 6.500h4M3.500 10h0" fill="none" stroke="#000" stroke-width="1"/><rect x="2" y="1" width="3.500" height="3" fill="#fff" stroke="#000" stroke-width=".9"/><rect x="7.500" y="5" width="3.500" height="3" fill="#fff" stroke="#000" stroke-width=".9"/><rect x="7.500" y="11" width="3.500" height="3" fill="#fff" stroke="#000" stroke-width=".9"/><rect x="11.500" y="5.500" width="2.500" height="2" fill="#1a30c0"/><rect x="11.500" y="11.500" width="2.500" height="2" fill="#1a30c0"/></svg>
<svg style="left:58px;top:147px" width="16" height="16" viewBox="0 0 16 16"><path d="M2.500 2v12M2.500 2h4M2.500 7h3M2.500 12h3" fill="none" stroke="#000" stroke-width="1.100"/><path d="M6 6l1.500 1.500 2-3M6 11l1.500 1.500 2-3" stroke="#000" fill="none" stroke-width=".9"/><rect x="11" y="2" width="4" height="2.500" fill="#1a30c0"/><rect x="11" y="6.500" width="4" height="2.500" fill="#1a30c0"/><rect x="11" y="11" width="4" height="2.500" fill="#1a30c0"/></svg>
<div class="dd" style="left:81px;top:154px"></div>
<div class="sep" style="left:91px;top:147px"></div>
<div class="hl" style="left:96px;top:144px;width:22px;height:22px"></div>
<svg style="left:99px;top:147px" width="16" height="16" viewBox="0 0 16 16"><rect x="3.500" y="1.500" width="9" height="13" fill="#fff" stroke="#0a1a80" stroke-width="1.200"/><rect x="4" y="10.500" width="8" height="3.500" fill="#1a30c0"/><path d="M5.500 3.500h2M6.500 3.500v4h2M6.500 5.500h2" stroke="#000" stroke-width=".8" fill="none"/></svg>
<svg style="left:121px;top:147px" width="16" height="16" viewBox="0 0 16 16"><rect x="1.500" y="2.500" width="8" height="11" fill="#f0f0f0" stroke="#a8a8a8"/><rect x="7.500" y="5.500" width="7" height="9" fill="#f4f4f4" stroke="#a8a8a8"/><path d="M3 5h4M3 7h3M9 8h4M9 10h4M9 12h4" stroke="#b8b8b8"/><path d="M11 1l2 3h-4z" fill="#b0b0b0"/></svg>
<div class="abs" style="left:33px;top:170px;width:192px;height:315px;background:#fff;border:1px solid #8e959e;overflow:hidden"></div>
<div class="abs" style="left:33px;top:487px;width:192px;height:129px;background:#f0f0f0;border:1px solid #9aa0a8"></div>
<div class="abs" style="left:28px;top:617px;width:201px;height:1px;background:#a0a6ae"></div>
<div class="abs" style="left:228px;top:123px;width:1px;height:495px;background:#a0a6ae"></div>
<div class="abs" style="left:34px;top:467px;width:190px;height:17px;background:#f0f0f0"></div>
<div class="abs" style="left:53px;top:468px;width:88px;height:15px;background:linear-gradient(#f6f6f6,#e6e6e6 45%,#d2d2d2 50%,#c8c8c8);border:1px solid #8c8c8c;border-radius:2px"></div>
<svg style="left:34px;top:467px" width="190" height="17" viewBox="0 0 190 17"><path d="M11 5v7l-4-3.500zM179 5v7l4-3.500z" fill="#444"/><path d="M60.500 5v7M63.500 5v7M66.500 5v7" stroke="#555"/></svg>
<div class="abs" style="left:33px;top:617px;width:69px;height:20px;background:#fff;border:1px solid #a0a6ae;border-top:0;border-radius:0 0 3px 3px"></div>
<div class="abs" style="left:37px;top:621px;font-size:11.500px;letter-spacing:-.3px;color:#222;white-space:nowrap">Построение</div>
<div class="abs" style="left:109px;top:621px;font-size:11.500px;letter-spacing:-.3px;color:#222;white-space:nowrap">Исполнения</div>
<div class="abs" style="left:182px;top:621px;font-size:11.500px;letter-spacing:-.3px;color:#222;white-space:nowrap">Зоны</div>
<svg style="left:0;top:0" width="240" height="480" viewBox="0 0 240 480"><g stroke="#8a8a8a" stroke-dasharray="1 1" fill="none"><path d="M48.500 193v170M53 203.500h8M53 223.500h8M53 283.500h8M53 323.500h8M53 343.500h8M49 363.500h12M72.500 232v31M73 243.500h12M73 263.500h12M72.500 292v6M77 303.500h8"/></g></svg>
<div class="abs" style="left:106px;top:234px;width:62px;height:18px;background:#ededed"></div>
<svg style="left:39px;top:175px" width="18" height="18" viewBox="0 0 16 16"><path d="M1 1l5 4M6 0l-3 6" stroke="#e00000" stroke-width="1.200"/><path d="M2.500 5.500h7l2 2v7h-9z" fill="#f4d060" stroke="#503000"/><path d="M4 8h4v4h-4z" fill="#fff" stroke="#503000" stroke-width=".7"/><circle cx="13" cy="11.500" r="4.200" fill="#fff" stroke="#e00000" stroke-width="1.300"/><path d="M13 9v3" stroke="#000" stroke-width="1.400"/><circle cx="13" cy="13.500" r=".8" fill="#000"/></svg>
<div class="abs" style="left:63px;top:177px;width:161px;overflow:hidden;font-size:12px;letter-spacing:0;color:#111;white-space:nowrap">(-) Сборка (Тел-1, Сборочны</div>
<svg style="left:44px;top:199px" width="9" height="9" viewBox="0 0 9 9"><rect x=".5" y=".5" width="8" height="8" rx="1" fill="#fff" stroke="#8a8a8a"/><path d="M2.500 4.500h4M4.500 2.500v4" stroke="#1a2a80"/></svg>
<svg style="left:62px;top:194px" width="18" height="18" viewBox="0 0 16 16"><path d="M6 2h9l-2 9h-9z" fill="#a8d8f0" stroke="#0a2080" stroke-width="1.200"/><path d="M0 15l5-4" stroke="#e02020" stroke-width="1.200"/><path d="M4 11.500h10" stroke="#20a020" stroke-width="1.200"/></svg>
<div class="abs" style="left:86px;top:196px;font-size:12px;letter-spacing:-.1px;color:#111;white-space:nowrap">Системы координат</div>
<svg style="left:44px;top:219px" width="9" height="9" viewBox="0 0 9 9"><rect x=".5" y=".5" width="8" height="8" rx="1" fill="#fff" stroke="#8a8a8a"/><path d="M2.500 4.500h4" stroke="#1a2a80"/></svg>
<svg style="left:62px;top:214px" width="18" height="18" viewBox="0 0 16 16"><path d="M6.500 1.500h6v6h-2v7h-9v-8h5z" fill="#a8d8f0" stroke="#0a2080" stroke-width="1.200"/></svg>
<div class="abs" style="left:86px;top:216px;font-size:12px;letter-spacing:-.1px;color:#111;white-space:nowrap">Эскизы</div>
<svg style="left:85px;top:234px" width="18" height="18" viewBox="0 0 16 16"><path d="M2.500 2.500h5v5h6v6h-11z" fill="#c8c8c8" stroke="#555" stroke-width="1.200"/><rect x="1" y="1" width="3" height="3" fill="#555"/><rect x="6" y="1" width="3" height="3" fill="#555"/><rect x="12" y="6" width="3" height="3" fill="#555"/><rect x="12" y="12" width="3" height="3" fill="#555"/><rect x="1" y="12" width="3" height="3" fill="#555"/></svg>
<div class="abs" style="left:109px;top:236px;font-size:12px;letter-spacing:-.1px;color:#111;white-space:nowrap">(-) Эскиз:5</div>
<svg style="left:85px;top:254px" width="18" height="18" viewBox="0 0 16 16"><path d="M2.500 2.500h5v5h6v6h-11z" fill="#a8d8f0" stroke="#0a2080" stroke-width="1.200"/><rect x="1" y="1" width="3" height="3" fill="#0a2080"/><rect x="6" y="1" width="3" height="3" fill="#0a2080"/><rect x="12" y="6" width="3" height="3" fill="#0a2080"/><rect x="12" y="12" width="3" height="3" fill="#0a2080"/><rect x="1" y="12" width="3" height="3" fill="#0a2080"/></svg>
<div class="abs" style="left:109px;top:256px;font-size:12px;letter-spacing:-.1px;color:#111;white-space:nowrap">(-) Эскиз:10</div>
<svg style="left:44px;top:279px" width="9" height="9" viewBox="0 0 9 9"><rect x=".5" y=".5" width="8" height="8" rx="1" fill="#fff" stroke="#8a8a8a"/><path d="M2.500 4.500h4" stroke="#1a2a80"/></svg>
<svg style="left:62px;top:274px" width="18" height="18" viewBox="0 0 16 16"><path d="M1 4v5c0 3 8 3 8 0v-5" fill="#888" stroke="#333" stroke-width=".7"/><ellipse cx="5" cy="4" rx="4" ry="2.500" fill="#d8d8d8" stroke="#333" stroke-width=".7"/><ellipse cx="5" cy="4" rx="1.500" ry="1" fill="#555"/><path d="M6 8v5c0 3 9 3 9 0v-5" fill="#777" stroke="#333" stroke-width=".7"/><ellipse cx="10.500" cy="8" rx="4.500" ry="2.800" fill="#d0d0d0" stroke="#333" stroke-width=".7"/><ellipse cx="10.500" cy="8" rx="1.800" ry="1.100" fill="#555"/></svg>
<div class="abs" style="left:86px;top:276px;font-size:12px;letter-spacing:-.1px;color:#111;white-space:nowrap">Тела</div>
<svg style="left:68px;top:299px" width="9" height="9" viewBox="0 0 9 9"><rect x=".5" y=".5" width="8" height="8" rx="1" fill="#fff" stroke="#8a8a8a"/><path d="M2.500 4.500h4M4.500 2.500v4" stroke="#1a2a80"/></svg>
<svg style="left:86px;top:294px" width="18" height="18" viewBox="0 0 16 16"><path d="M1.500 5v6c0 4 13 4 13 0v-6" fill="#808080" stroke="#333" stroke-width=".7"/><ellipse cx="8" cy="5" rx="6.500" ry="3.500" fill="#d4d4d4" stroke="#333" stroke-width=".7"/><ellipse cx="8" cy="5" rx="2.500" ry="1.400" fill="#555"/></svg>
<div class="abs" style="left:109px;top:296px;font-size:12px;letter-spacing:-.1px;color:#111;white-space:nowrap">Тело 19</div>
<svg style="left:44px;top:319px" width="9" height="9" viewBox="0 0 9 9"><rect x=".5" y=".5" width="8" height="8" rx="1" fill="#fff" stroke="#8a8a8a"/><path d="M2.500 4.500h4M4.500 2.500v4" stroke="#1a2a80"/></svg>
<svg style="left:62px;top:314px" width="18" height="18" viewBox="0 0 16 16"><path d="M0 0l5 5M5 0l-2 7" stroke="#1a30c0" stroke-width="1.300"/><path d="M1 1l4 3" stroke="#e00000" stroke-width="1.200"/><path d="M5 6l3-2 3 2v5h-6z" fill="#e8e8e8" stroke="#444" stroke-width=".7"/><circle cx="12" cy="12" r="4.200" fill="#fff" stroke="#e00000" stroke-width="1.300"/><path d="M12 9.500v3" stroke="#000" stroke-width="1.400"/><circle cx="12" cy="14" r=".8" fill="#000"/></svg>
<div class="abs" style="left:86px;top:316px;font-size:12px;letter-spacing:-.1px;color:#111;white-space:nowrap">Компоненты</div>
<svg style="left:44px;top:339px" width="9" height="9" viewBox="0 0 9 9"><rect x=".5" y=".5" width="8" height="8" rx="1" fill="#fff" stroke="#8a8a8a"/><path d="M2.500 4.500h4M4.500 2.500v4" stroke="#1a2a80"/></svg>
<svg style="left:62px;top:334px" width="18" height="18" viewBox="0 0 16 16"><path d="M11 2l-7 7c-1 1.500 1 3.500 2.500 2l6-6c2-2.500-1.500-5.500-3.500-3l-7 7.500c-2.500 3 2 6.500 4.500 3.500" fill="none" stroke="#1a30c0" stroke-width="1.300"/><circle cx="12" cy="12" r="4.200" fill="#fff" stroke="#e00000" stroke-width="1.300"/><path d="M12 9.500v3" stroke="#000" stroke-width="1.400"/><circle cx="12" cy="14" r=".8" fill="#000"/></svg>
<div class="abs" style="left:86px;top:336px;font-size:12px;letter-spacing:-.1px;color:#111;white-space:nowrap">Сопряжения</div>
<svg style="left:62px;top:354px" width="18" height="18" viewBox="0 0 16 16"><path d="M2 6l4-4h5l3 3v9h-12z" fill="#2a60e0" stroke="#0a2080" stroke-width=".8"/><path d="M2 6l4-4h5l-4 4z" fill="#9fd8ff"/><path d="M2 6h5v8h-5z" fill="#3f8ff0"/><circle cx="12" cy="12" r="4.200" fill="#fff" stroke="#e00000" stroke-width="1.300"/><path d="M12 9.500v3" stroke="#000" stroke-width="1.400"/><circle cx="12" cy="14" r=".8" fill="#000"/></svg>
<div class="abs" style="left:86px;top:356px;font-size:12px;letter-spacing:-.1px;color:#111;white-space:nowrap">Фаска:1</div>
<!-- 3D viewport -->
<div class="abs" style="left:233px;top:122px;width:1133px;height:520px;background:#fff;border-right:1px solid #9aa0a8;border-bottom:1px solid #9aa0a8"></div>
<div class="abs" style="left:233px;top:121px;width:1132px;height:2px;background:linear-gradient(90deg,#c9d4f3,#e8edf9 40%,#fff)"></div>
<div class="abs" style="left:233px;top:123px;width:1128px;height:515px;background:#8a8a8a"></div>
<svg style="left:0;top:0" width="1366" height="768" viewBox="0 0 1366 768" shape-rendering="crispEdges">
<defs>
<clipPath id="vp"><rect x="234" y="124" width="1127" height="513.500"/></clipPath>
<linearGradient id="sky" x1="0" y1="125" x2="0" y2="637" gradientUnits="userSpaceOnUse"><stop offset="0" stop-color="#6aa6e2"/><stop offset=".5" stop-color="#b1d0f0"/><stop offset=".8" stop-color="#dde9f8"/><stop offset="1" stop-color="#fdfeff"/></linearGradient>
<linearGradient id="cylA" x1="0" y1="0" x2="0" y2="1"><stop offset="0" stop-color="#8a8a8a"/><stop offset=".3" stop-color="#b6b6b6"/><stop offset="1" stop-color="#686868"/></linearGradient>
<linearGradient id="cylB" x1="0" y1="0" x2="1" y2="0"><stop offset="0" stop-color="#777"/><stop offset=".55" stop-color="#9c9c9c"/><stop offset="1" stop-color="#868686"/></linearGradient>
<linearGradient id="cylL" gradientUnits="userSpaceOnUse" x1="270" y1="200" x2="279" y2="219"><stop offset="0" stop-color="#6a6a6a"/><stop offset=".35" stop-color="#b2b2b2"/><stop offset="1" stop-color="#747474"/></linearGradient>
<linearGradient id="cylT" gradientUnits="userSpaceOnUse" x1="760" y1="125" x2="748" y2="150"><stop offset="0" stop-color="#9a9a9a"/><stop offset=".3" stop-color="#b8b8b8"/><stop offset="1" stop-color="#6c6c6c"/></linearGradient>
<linearGradient id="cylR" gradientUnits="userSpaceOnUse" x1="640" y1="226" x2="633" y2="246"><stop offset="0" stop-color="#9a9a9a"/><stop offset=".3" stop-color="#b4b4b4"/><stop offset="1" stop-color="#6a6a6a"/></linearGradient>
<linearGradient id="cylS" gradientUnits="userSpaceOnUse" x1="660" y1="605" x2="668" y2="622"><stop offset="0" stop-color="#5e5e5e"/><stop offset=".4" stop-color="#a8a8a8"/><stop offset="1" stop-color="#6a6a6a"/></linearGradient>
<linearGradient id="cylD" gradientUnits="userSpaceOnUse" x1="985" y1="440" x2="993" y2="458"><stop offset="0" stop-color="#5c5c5c"/><stop offset=".4" stop-color="#909090"/><stop offset="1" stop-color="#6a6a6a"/></linearGradient>
<linearGradient id="dome" x1="0" y1="0" x2="1" y2=".6"><stop offset="0" stop-color="#1bea1b"/><stop offset="1" stop-color="#078a07"/></linearGradient>
<linearGradient id="screwsh" gradientUnits="userSpaceOnUse" x1="950" y1="560" x2="958" y2="576"><stop offset="0" stop-color="#000" stop-opacity=".55"/><stop offset=".4" stop-color="#000" stop-opacity="0"/><stop offset="1" stop-color="#000" stop-opacity=".45"/></linearGradient>
<pattern id="screw" patternUnits="userSpaceOnUse" width="3.400" height="20" patternTransform="rotate(-27.500 873 602)"><rect width="3.400" height="20" fill="#2a2a2a"/><rect x="1.200" width="1.300" height="20" fill="#c4c4c4"/></pattern>
</defs>
<g clip-path="url(#vp)" stroke-linejoin="round">
<rect x="234" y="124" width="1128" height="514" fill="url(#sky)"/>
<polygon points="234.8,122.0 245.9,122.0 245.9,144.0 234.8,162.3" fill="#5f5f5f" stroke="#000" stroke-width="1" />
<polygon points="283.5,171.0 301.1,163.7 301.1,190.8 283.5,180.6" fill="#dcdcdc" stroke="#000" stroke-width="1" />
<polygon points="283.5,180.6 301.8,187.2 301.8,192.3 283.5,201.1" fill="#b0b0b0" stroke="#000" stroke-width="1" />
<polyline points="283.5,186.4 301.8,192.3" fill="none" stroke="#000" stroke-width="1" />
<polygon points="235.2,163.7 247.6,157.1 283.5,171.0 273.3,175.4" fill="#8c8c8c" stroke="#000" stroke-width="1" />
<polygon points="235.2,163.7 271.4,175.0 274.7,180.6 275.8,202.5 235.9,223.0" fill="#a2a2a2" stroke="#000" stroke-width="1" />
<polygon points="271.4,175.0 283.5,171.0 285.3,176.2 285.3,197.4 275.8,202.5 274.7,180.6" fill="#6c6c6c" stroke="#000" stroke-width="1" />
<ellipse shape-rendering="geometricPrecision" cx="256.7" cy="178.8" rx="4" ry="4.800" fill="#b8b8b8" stroke="#000"/>
<polygon points="232.0,364.6 278.4,341.5 706.3,508.2 712.0,640.0 232.0,640.0" fill="#cfcfcf" stroke="#000" stroke-width="1" />
<polygon points="232.0,325.5 378.7,251.5 751.7,396.8 706.3,489.7 706.3,508.2 278.4,341.5 232.0,364.6" fill="#9d9d9d" stroke="#000" stroke-width="1" />
<polygon points="234.8,277.2 312.8,238.4 315.0,231.1 354.5,245.7 354.5,264.0 234.8,325.5" fill="#5c5c5c" stroke="#000" stroke-width="1" />
<polygon points="232.0,222.0 302.0,189.0 321.0,195.0 321.0,240.0 232.0,282.0" fill="#868686" stroke="none" stroke-width="1" />
<polygon points="232.0,241.6 320.4,198.7 321.1,212.3 232.0,258.8" fill="#868686" stroke="#000" stroke-width="1" />
<polygon points="232.0,259.0 313.0,219.0 313.0,224.5 232.0,265.3" fill="#b6b6b6" stroke="#000" stroke-width="1" />
<polygon points="232.0,265.3 313.0,224.5 313.0,228.5 232.0,269.6" fill="#6e6e6e" stroke="#000" stroke-width="1" />
<polygon points="232.0,269.6 313.0,228.5 313.0,235.0 232.0,277.4" fill="#b2b2b2" stroke="#000" stroke-width="1" />
<polygon points="232,223 301.800,189.300 320.400,195.100 320.400,198.700 232,241.600" fill="url(#cylL)" stroke="#000"/>
<polygon points="470.0,122.0 621.6,122.0 633.0,126.4 826.3,201.0 831.0,314.4 784.2,296.9 470.0,179.0" fill="#878787" stroke="#000" stroke-width="1" />
<polygon points="621.6,122.0 740.0,122.0 806.0,153.5 833.0,164.5 840.3,166.0 869.6,178.4 868.9,179.5 826.3,201.0 633.0,126.4" fill="#a3a3a3" stroke="#000" stroke-width="1" />
<polygon points="826.3,201.0 868.9,179.3 875.0,292.5 831.0,314.4" fill="#7a7a7a" stroke="#000" stroke-width="1" />
<polygon points="829.6,204.5 866.2,185.5 871.3,290.3 833.5,309.3" fill="#8b8b8b" stroke="#000" stroke-width="1" />
<polygon points="832.5,274.9 871.0,288.8 834.0,307.8" fill="#a9a9a9" stroke="#000" stroke-width="1" />
<polygon points="646.2,122.0 657.9,122.0 786.0,174.7 786.0,179.1" fill="#9a9a9a" stroke="#000" stroke-width="1" />
<polygon points="657.9,122.0 664.5,122.0 790.4,172.5 786.0,174.7" fill="#b0b0b0" stroke="#000" stroke-width="1" />
<polygon points="664.5,122.0 672.5,122.0 793.3,170.3 790.4,172.5" fill="#8a8a8a" stroke="#000" stroke-width="1" />
<polygon points="672.5,122.0 716.5,122.0 794.1,153.5 793.3,170.3" fill="#ababab" stroke="#000" stroke-width="1" />
<polygon points="716.5,122.0 763.3,122.0 801.4,140.3 794.1,153.5" fill="url(#cylT)" stroke="#000"/>
<polygon points="794.1,153.5 794.8,145.4 799.9,140.3 805.0,142.5 806.1,149.1 803.6,153.5 808.7,161.5 815.3,159.3 816.0,164.5 786.7,179.1 786.7,174.7 793.3,170.3 797.7,158.6" fill="#6c6c6c" stroke="#000" stroke-width="1" />
<polygon points="474.7,138.8 633.0,198.1 700.0,225.1 783.5,256.6 779.8,258.8 700.0,228.8 633.0,202.5 474.7,143.2" fill="#a8a8a8" stroke="#000" stroke-width="1" />
<polygon points="474.7,143.2 633.0,202.5 700.0,228.8 779.8,258.8 779.8,266.9 700.0,236.1 633.0,210.0 500.3,159.3 474.7,150.0" fill="#8d8d8d" stroke="#000" stroke-width="1" />
<polygon points="500.3,160.0 633.0,210.0 700.0,236.1 779.8,266.9 770.3,278.6 700.0,250.7 633.0,224.5 496.0,171.8" fill="#b3b3b3" stroke="#000" stroke-width="1" />
<ellipse shape-rendering="geometricPrecision" cx="490.4" cy="179.8" rx="4.500" ry="8.200" fill="#8e8e8e" stroke="#000" transform="rotate(12 490.4 179.8)"/>
<polygon points="491.600,171.800 633,224.500 700,250.700 768.800,277.800 763,293.200 700,269.800 633,244.700 605.800,234 488.600,187.900" fill="url(#cylR)" stroke="none"/>
<polyline points="491.6,171.8 633.0,224.5 700.0,250.7 768.8,277.8" fill="none" stroke="#000" stroke-width="1" />
<polyline points="488.6,187.9 605.8,234.0 633.0,244.7 700.0,269.8 763.0,293.2" fill="none" stroke="#000" stroke-width="1" />
<polygon points="779.8,258.8 783.5,256.6 784.6,296.1 780.5,296.1 780.5,288.5 771.7,287.1 770.3,278.6 779.8,266.9" fill="#5e5e5e" stroke="#000" stroke-width="1" />
<polygon points="771.7,287.3 780.2,288.5 780.2,296.1 768.8,292.0" fill="#a8a8a8" stroke="#000" stroke-width="1" />
<ellipse shape-rendering="geometricPrecision" cx="765.2" cy="285.4" rx="4.500" ry="8" fill="#6a6a6a" stroke="#000" transform="rotate(22 765.2 285.4)"/>
<polygon points="475.5,146.2 500.3,154.9 476.2,165.2" fill="#a2a2a2" stroke="#000" stroke-width="1" />
<polygon points="476.2,165.2 500.3,154.9 500.6,163.7 496.0,171.0 491.6,171.8 486.4,179.1 486.4,185.0 491.6,188.6 501.8,192.3 501.8,196.7 476.9,209.4" fill="#5e5e5e" stroke="#000" stroke-width="1" />
<polygon points="298.2,122.0 309.1,122.0 312.8,193.0 302.0,189.5" fill="#8a8a8a" stroke="#000" stroke-width="1" />
<polygon points="309.1,122.0 322.3,122.0 322.0,180.0 321.5,198.0 312.8,193.0" fill="#6e6e6e" stroke="#000" stroke-width="1" />
<polygon points="322.300,122 354.500,122 357.100,180 358,222 321.200,222 321.200,202 322,180" fill="url(#cylB)" stroke="#000"/>
<polygon points="354.5,122.0 362.6,122.0 365.9,180.0 368.1,213.7 358.0,213.0 357.1,180.0" fill="#7a7a7a" stroke="#000" stroke-width="1" />
<polygon points="362.6,122.0 373.6,122.0 376.1,180.0 378.3,216.6 368.1,213.7 365.9,180.0" fill="#8e8e8e" stroke="#000" stroke-width="1" />
<polygon points="373.6,122.0 421.9,122.0 424.5,180.0 427.4,226.9 402.5,238.6 388.0,221.0 378.3,216.6 376.1,180.0" fill="#5a5a5a" stroke="#000" stroke-width="1" />
<polygon points="421.9,122.0 435.2,122.0 436.2,180.0 438.4,234.9 428.1,239.3 427.4,226.9 424.5,180.0" fill="#8e8e8e" stroke="#000" stroke-width="1" />
<polygon points="435.2,122.0 444.7,122.0 447.1,180.0 449.3,228.3 439.1,234.9 438.4,234.9 436.2,180.0" fill="#5e5e5e" stroke="#000" stroke-width="1" />
<polygon points="428.1,239.3 433.2,240.0 449.3,229.0 449.3,228.3 438.4,234.9" fill="#6a6a6a" stroke="#000" stroke-width="1" />
<polygon points="444.7,122.0 452.8,122.0 455.2,180.0 455.2,209.3 449.3,210.7 447.1,180.0" fill="#a6d2cf" stroke="#000" stroke-width="1" />
<polyline points="447.4,125.0 450.6,210.4" fill="none" stroke="#2a4a48" stroke-width="0.8" />
<polyline points="450.2,125.0 453.0,209.8" fill="none" stroke="#2a4a48" stroke-width="0.8" />
<polygon points="452.8,122.0 463.7,122.0 466.9,180.0 468.4,213.7 455.9,208.6 455.2,180.0" fill="#8c8c8c" stroke="#000" stroke-width="1" />
<polygon points="463.7,122.0 474.7,122.0 476.9,209.4 468.4,213.7 466.9,180.0" fill="#5e5e5e" stroke="#000" stroke-width="1" />
<ellipse shape-rendering="geometricPrecision" cx="460.300" cy="174.700" rx="3.200" ry="4.400" fill="#6c6c6c" stroke="#000" transform="rotate(-28 460.300 174.700)"/><ellipse shape-rendering="geometricPrecision" cx="461.200" cy="175.500" rx="1.500" ry="2.800" fill="#9a9a9a" transform="rotate(-28 461.200 175.500)"/>
<ellipse shape-rendering="geometricPrecision" cx="461.900" cy="204.900" rx="3.200" ry="4.400" fill="#6c6c6c" stroke="#000" transform="rotate(-28 461.900 204.900)"/><ellipse shape-rendering="geometricPrecision" cx="462.800" cy="205.700" rx="1.500" ry="2.800" fill="#9a9a9a" transform="rotate(-28 462.800 205.700)"/>
<polygon points="402.5,238.6 427.4,226.9 428.1,239.3 402.5,251.7" fill="#6e6e6e" stroke="#000" stroke-width="1" />
<polygon points="376.1,216.6 402.5,223.9 402.5,240.0 376.1,235.6" fill="#5c5c5c" stroke="none" stroke-width="1" />
<polygon points="311.0,221.7 321.2,212.9 329.3,225.4 361.5,238.6 379.1,233.4 387.8,232.0 401.0,238.6 393.7,243.7 382.0,247.3 367.3,246.6 316.1,226.1" fill="#a6a6a6" stroke="#000" stroke-width="1" />
<polygon points="310.5,222.5 316.1,226.1 367.3,246.6 367.3,257.6 316.1,237.1 311.7,232.7" fill="#8e8e8e" stroke="#000" stroke-width="1" />
<polygon points="367.3,246.6 382.0,247.3 393.7,243.7 391.5,256.4 382.0,259.8 367.3,257.6" fill="url(#cylB)" stroke="#000"/>
<polygon points="393.7,243.7 401.0,238.6 401.8,251.0 391.5,256.4" fill="#7c7c7c" stroke="#000" stroke-width="1" />
<polyline points="316.1,226.1 316.1,237.1" fill="none" stroke="#000" stroke-width="1" />
<polyline points="379.1,233.4 401.0,239.3" fill="none" stroke="#000" stroke-width="1" />
<path d="M387.6 220.3 Q399.6 221.7 401.0 232.7 L401.0 238.6 L390.0 232.7 Z" fill="url(#cylB)" stroke="#000"/>
<path d="M321.2 202.0 Q330.7 214.0 355.6 216.6 L367.3 213.1 Q379.1 218.1 388.7 220.4 Q390.5 223.9 389.3 227.4 Q379.1 238.6 361.5 238.6 Q336.6 237.4 322.0 216.6 Z" fill="#000"/>
<path d="M354.9 216.6 L355.6 204.9 L357.8 199.8 L360.0 197.9 L362.7 199.8 L364.7 204.9 L365.9 217.3 L360.0 218.8 Z" fill="url(#cylB)" stroke="#000"/>
<path d="M321.7 202.0 L322.3 188.8 L324.2 183.7 L326.1 188.8 L326.4 204.9 Z" fill="#b0b0b0" stroke="#000" stroke-width=".7"/>
<polygon points="361.5,274.0 371.0,274.0 373.3,384.0 372.0,386.0 370.0,386.0 368.6,384.0" fill="url(#cylB)" stroke="#000" stroke-width=".8"/>
<polyline points="362.0,276.0 369.0,384.0" fill="none" stroke="#000" stroke-width="1.2" stroke-dasharray="6 2.500" shape-rendering="geometricPrecision"/>
<polygon points="352.7,256.1 376.9,260.5 376.1,269.3 371.7,274.4 360.0,274.4 354.9,269.3" fill="#000" stroke="#000" stroke-width="1" />
<polygon points="342.5,249.5 358.6,256.1 352.7,256.1" fill="#dfeeff" stroke="none" stroke-width="1" />
<polygon points="887.9,176.2 903.3,180.6 905.5,212.8 912.5,236.0 900.0,236.0" fill="#6c6c6c" stroke="#000" stroke-width="1" />
<polygon points="869.0,179.5 879.1,181.3 934.9,322.9 940.4,458.0 942.2,512.6 864.5,483.3 855.8,303.2 875.0,292.5" fill="#8a8a8a" stroke="#000" stroke-width="1" />
<polygon points="879.1,181.3 887.9,176.2 944.3,318.6 934.9,322.9" fill="#6a6a6a" stroke="#000" stroke-width="1" />
<polygon points="934.9,322.9 944.3,318.6 950.9,458.0 952.4,509.6 942.2,512.6 940.4,458.0" fill="#5e5e5e" stroke="#000" stroke-width="1" />
<polyline points="934.9,322.9 944.3,318.6" fill="none" stroke="#000" stroke-width="1" />
<polygon points="840.3,166.0 849.0,161.5 888.0,176.0 879.0,181.3 869.6,178.4" fill="#a2a2a2" stroke="#000" stroke-width="1" />
<polygon points="811.9,308.7 830.6,314.2 855.8,303.2 864.5,483.3 719.6,557.5 716.5,493.5" fill="#595959" stroke="#000" stroke-width="1" />
<polygon points="800.9,304.3 811.9,308.7 716.5,493.5 706.3,489.7" fill="#b2b2b2" stroke="#000" stroke-width="1" />
<polygon points="706.3,489.7 716.5,493.5 719.6,557.5 707.8,552.8" fill="#9c9c9c" stroke="#000" stroke-width="1" />
<polyline points="706.3,489.7 716.5,493.5" fill="none" stroke="#000" stroke-width="1" />
<polygon points="698.3,550.9 707.8,546.2 707.8,552.8 719.6,557.5 865.4,482.9 942.4,512.5 953.0,508.9 859.4,557.5 754.0,571.7" fill="#9e9e9e" stroke="#000" stroke-width="1" />
<polygon points="698.3,550.9 754.0,571.7 754.0,584.8 698.3,564.6" fill="#8c8c8c" stroke="#000" stroke-width="1" />
<polygon points="754.0,571.7 859.4,557.5 860.6,569.4 754.0,584.8" fill="#808080" stroke="#000" stroke-width="1" />
<polygon points="859.4,557.5 953.0,508.9 954.2,522.0 860.6,569.4" fill="#787878" stroke="#000" stroke-width="1" />
<ellipse shape-rendering="geometricPrecision" cx="866.5" cy="488.3" rx="4" ry="2.400" fill="#8a8a8a" stroke="#000" stroke-width=".8"/>
<ellipse shape-rendering="geometricPrecision" cx="882.4" cy="496.4" rx="4" ry="2.400" fill="#8a8a8a" stroke="#000" stroke-width=".8"/>
<ellipse shape-rendering="geometricPrecision" cx="845.2" cy="500.2" rx="4" ry="2.400" fill="#8a8a8a" stroke="#000" stroke-width=".8"/>
<ellipse shape-rendering="geometricPrecision" cx="754.0" cy="547.6" rx="4" ry="2.400" fill="#8a8a8a" stroke="#000" stroke-width=".8"/>
<ellipse shape-rendering="geometricPrecision" cx="732.2" cy="559.4" rx="4" ry="2.400" fill="#8a8a8a" stroke="#000" stroke-width=".8"/>
<ellipse shape-rendering="geometricPrecision" cx="752.1" cy="565.1" rx="4" ry="2.400" fill="#8a8a8a" stroke="#000" stroke-width=".8"/>
<ellipse shape-rendering="geometricPrecision" cx="705.4" cy="548.8" rx="4" ry="2.400" fill="#8a8a8a" stroke="#000" stroke-width=".8"/>
<polygon points="848.6,509.3 858.6,502.3 872.6,506.3 861.6,513.8" fill="#7a7a7a" stroke="#000" stroke-width=".8"/>
<polygon points="854.6,509.8 862.6,505.3 867.6,507.3 860.6,512.3" fill="#b0b0b0" stroke="#000" stroke-width=".6"/>
<polygon points="761.4,554.3 771.4,547.3 785.4,551.3 774.4,558.8" fill="#7a7a7a" stroke="#000" stroke-width=".8"/>
<polygon points="767.4,554.8 775.4,550.3 780.4,552.3 773.4,557.3" fill="#b0b0b0" stroke="#000" stroke-width=".6"/>
<polygon points="642.7,636.3 720.9,596.2 733.2,607.6 739.3,606.8 677.0,636.3" fill="#8a8a8a" stroke="#000" stroke-width="1" />
<polygon points="677.0,636.3 739.3,606.8 741.1,609.4 695.4,636.3" fill="#b4b4b4" stroke="#000" stroke-width="1" />
<polygon points="695.4,636.3 741.1,609.4 744.6,611.2 711.2,636.3" fill="#707070" stroke="#000" stroke-width="1" />
<polygon points="711.2,636.3 744.6,611.2 752.5,615.5 725.3,636.3" fill="#b0b0b0" stroke="#000" stroke-width="1" />
<polygon points="725.3,636.3 752.5,615.5 758.7,618.2 773.6,610.3 774.5,636.3" fill="#5e5e5e" stroke="#000" stroke-width="1" />
<polygon points="600.5,640.1 713.0,581.3 718.3,583.9 721.4,592.7 720.9,596.6 642.7,636.3 635.7,640.1" fill="url(#cylS)" stroke="#000"/>
<polygon points="697.2,564.6 732.3,577.8 733.2,607.6 728.8,605.9 722.6,598.0 721.4,590.1 717.4,582.2 713.0,581.3 698.0,588.3" fill="#8a8a8a" stroke="#000" stroke-width="1" />
<polygon points="732.3,577.8 739.3,580.4 741.1,608.9 733.2,607.6" fill="#7a7a7a" stroke="#000" stroke-width="1" />
<polygon points="739.3,580.4 750.8,584.8 752.5,614.7 741.1,608.9" fill="#8e8e8e" stroke="#000" stroke-width="1" />
<polygon points="750.8,584.8 753.4,583.9 821.9,576.0 823.7,636.3 785.0,636.3 784.1,613.8 779.7,609.4 773.6,610.3 758.7,618.2 752.5,615.5" fill="#5e5e5e" stroke="#000" stroke-width="1" />
<polygon points="773.6,610.3 779.7,609.4 784.1,613.8 785.0,636.3 774.5,636.3" fill="#8a8a8a" stroke="#000" stroke-width="1" />
<polygon points="860.2,569.7 953.5,520.5 953.5,500.0 1003.7,500.0 1004.7,548.2 1044.7,554.3 1047.8,577.9 1050.8,634.2 869.4,636.3 868.4,601.5" fill="#5c5c5c" stroke="#000" stroke-width="1" />
<polygon points="879.7,619.9 912.5,603.5 960.6,620.5 933.0,636.3 869.8,636.3" fill="#9c9c9c" stroke="#000" stroke-width="1" />
<polygon points="912.5,603.5 960.6,576.2 960.6,620.5" fill="#8c8c8c" stroke="#000" stroke-width="1" />
<polygon points="960.6,576.2 1019.1,545.5 1044.7,554.3 1043.7,572.1 962.7,617.2 960.6,620.5" fill="#8e8e8e" stroke="#000" stroke-width="1" />
<polygon points="962.7,574.8 996.5,556.4 1043.7,572.1 962.7,617.2" fill="#9b9b9b" stroke="#000" stroke-width="1" />
<polyline points="996.5,556.4 1019.1,545.5" fill="none" stroke="#000" stroke-width="1" />
<polygon points="879.7,618.9 910.4,602.5 913.5,604.9 880.7,623.0" fill="#ffffff" stroke="none" stroke-width="1" />
<polygon points="784.5,580.5 821.9,576.4 822.8,637.4 784.5,637.4" fill="#5e5e5e" stroke="none" stroke-width="1" />
<polyline points="784.5,580.5 821.9,576.4 822.8,637.4" fill="none" stroke="#000" stroke-width="1" />
<polygon points="821.9,576.4 847.4,573.2 857.9,605.1 857.9,637.4 822.8,637.4" fill="#8e8e8e" stroke="#000" stroke-width="1" />
<polygon points="847.4,573.2 858.8,570.9 868.4,601.0 857.9,605.1" fill="#6a6a6a" stroke="#000" stroke-width="1" />
<polygon points="857.9,605.1 868.4,601.0 869.3,637.4 859.2,637.4" fill="#6e6e6e" stroke="#000" stroke-width="1" />
<polygon points="1003.7,500.0 1057.0,500.0 1059.0,559.4 1019.1,546.1 1004.7,542.0" fill="#8c8c8c" stroke="#000" stroke-width="1" />
<polygon points="1057.0,500.0 1067.2,500.0 1069.3,555.3 1059.0,559.4" fill="#6e6e6e" stroke="#000" stroke-width="1" />
<polygon points="951.7,475.5 1021.1,439.3 1027.9,454.0 1034.8,455.9 1033.8,461.2 1016.2,468.6 1016.2,477.4 953.7,503.8" fill="#8a8a8a" stroke="#000" stroke-width="1" />
<polygon points="951.7,475.5 1021.1,439.3 1027.9,454.0 952.7,485.8" fill="#787878" stroke="#000" stroke-width="1" />
<polygon points="952.7,485.8 1027.9,454.0 1034.8,455.9 1033.8,461.2 953.7,497.9" fill="#8e8e8e" stroke="#000" stroke-width="1" />
<polygon points="953.7,497.9 1015.2,472.1 1015.8,477.4 953.7,504.2" fill="#b2b2b2" stroke="#000" stroke-width="1" />
<polygon points="953.7,504.2 1015.8,477.4 1015.8,480.7 953.7,506.7" fill="#6e6e6e" stroke="#000" stroke-width="1" />
<polygon points="953.7,506.7 1015.8,480.7 1015.8,485.2 953.7,510.6" fill="#b0b0b0" stroke="#000" stroke-width="1" />
<polygon points="952.7,510.6 1015.8,485.2 1015.8,490.5 1002.5,487.2 1004.5,544.8 953.7,570.2 951.7,519.4" fill="#5c5c5c" stroke="none" stroke-width="1" />
<polyline points="952.7,510.6 1015.8,485.2" fill="none" stroke="#000" stroke-width="1" />
<path d="M950.7 457.9 L1015.2 423.3 L1020.1 424.1 L1024.0 429.5 L1024.4 436.4 L1021.1 439.7 L951.7 474.9 Z" fill="url(#cylD)" stroke="#000"/>
<polygon points="1017.2,466.7 1022.1,464.3 1063.1,473.5 1054.3,476.4" fill="#a4a4a4" stroke="#000" stroke-width="1" />
<polygon points="1017.2,466.7 1054.3,476.4 1057.2,483.3 1059.6,559.5 1046.5,555.6 1004.5,544.8 1002.5,487.2 1015.8,490.5" fill="#8c8c8c" stroke="#000" stroke-width="1" />
<polygon points="1054.3,476.4 1063.1,473.5 1066.0,480.3 1069.0,554.6 1059.6,559.5 1057.2,483.3" fill="#6e6e6e" stroke="#000" stroke-width="1" />
<ellipse shape-rendering="geometricPrecision" cx="1034.4" cy="480.3" rx="3.800" ry="4.800" fill="#9c9c9c" stroke="#000" transform="rotate(-20 1034.4 480.3)"/>
<ellipse shape-rendering="geometricPrecision" cx="1008.4" cy="493.6" rx="3" ry="4.500" fill="#9c9c9c" stroke="#000" transform="rotate(-20 1008.4 493.6)"/>
<polygon points="1063.1,471.0 1085.6,480.3 1096.3,486.2 1086.5,491.7 1067.0,487.2" fill="#b4b4b4" stroke="#000" stroke-width="1" />
<polygon points="1067.0,487.2 1086.5,491.7 1088.5,544.4 1084.6,544.8 1069.0,537.0" fill="#909090" stroke="#000" stroke-width="1" />
<polygon points="1086.5,491.7 1098.7,485.8 1102.8,536.2 1088.5,544.4" fill="#777" stroke="#000" stroke-width="1" />
<path d="M1067.4 493.0 A10 18 0 0 1 1068.6 529.6 Z" fill="#cacaca" stroke="#000" stroke-width=".8"/>
<path d="M1067.8 501.4 A6 10 0 0 1 1068.4 520.6 Z" fill="#e01010"/>
<circle shape-rendering="geometricPrecision" cx="1083.0" cy="494.6" r="1.500" fill="#777" stroke="#000" stroke-width=".6"/>
<circle shape-rendering="geometricPrecision" cx="1085.0" cy="539.3" r="1.500" fill="#777" stroke="#000" stroke-width=".6"/>
<polygon points="1063.1,471.0 1111.9,446.1 1140.3,457.5 1139.7,462.8 1096.3,483.9 1085.6,480.3" fill="#cdcdcd" stroke="#000" stroke-width="1" />
<polygon points="1096.3,483.9 1139.7,462.8 1147.1,467.6 1098.3,488.5 1096.3,486.6" fill="#9a9a9a" stroke="#000" stroke-width="1" />
<polyline points="1094.4,482.7 1138.9,460.4" fill="none" stroke="#555" stroke-width="0.7" />
<polyline points="1097.3,486.2 1144.2,465.7" fill="none" stroke="#333" stroke-width="0.8" />
<polygon points="1098.3,488.5 1147.1,467.6 1149.5,503.8 1102.2,530.2" fill="#7a7a7a" stroke="#000" stroke-width="1" />
<polyline points="1102.6,527.2 1143.2,507.7" fill="none" stroke="#333" stroke-width="0.8" />
<polygon points="833.0,122.0 859.4,122.0 860.1,136.6 848.4,135.5 841.8,136.6 835.9,134.4 833.0,130.8" fill="#8c8c8c" stroke="#000" stroke-width="1" />
<ellipse shape-rendering="geometricPrecision" cx="843.5" cy="127.6" rx="4" ry="4.500" fill="#b8b8b8" stroke="#000"/>
<polygon points="848.4,135.2 860.1,135.9 860.1,165.9 849.1,161.8" fill="#8c8c8c" stroke="#000" stroke-width="1" />
<polygon points="824.8,122.0 833.0,122.0 833.0,133.0 829.2,132.2 825.5,128.6" fill="#8c8c8c" stroke="#000" stroke-width="1" />
<polygon points="862.3,122.0 934.0,122.0 914.3,146.2" fill="#d4d4d4" stroke="#000" stroke-width="1" />
<polyline points="869.6,124.9 921.6,146.2" fill="none" stroke="#444" stroke-width="0.8" stroke-dasharray="1.500 1"/>
<polyline points="880.6,124.9 923.6,142.5" fill="none" stroke="#444" stroke-width="0.8" />
<polyline points="891.6,124.9 925.8,138.8" fill="none" stroke="#444" stroke-width="0.8" stroke-dasharray="1.500 1"/>
<polyline points="902.5,124.9 927.9,135.3" fill="none" stroke="#444" stroke-width="0.8" />
<polyline points="913.5,124.9 930.1,131.7" fill="none" stroke="#444" stroke-width="0.8" stroke-dasharray="1.500 1"/>
<polygon points="860.1,122.0 862.3,122.0 914.3,146.2 915.7,179.4 864.5,165.9 860.1,165.9" fill="#b6b6b6" stroke="#000" stroke-width="1" />
<polygon points="914.3,146.2 934.0,122.0 954.5,122.0 955.3,155.7 956.7,160.1 950.1,164.5 949.4,172.5 923.0,186.4 920.8,179.8 915.7,179.4" fill="#777" stroke="#000" stroke-width="1" />
<polygon points="864.5,161.5 920.8,179.8 923.0,186.4 865.2,167.4" fill="#c4c4c4" stroke="#000" stroke-width="1" />
<polygon points="867.4,163.7 919.4,180.6 919.7,182.8 867.8,165.9" fill="#555" stroke="none" stroke-width="1" />
<ellipse shape-rendering="geometricPrecision" cx="935.0" cy="152.7" rx="2.300" ry="3.300" fill="#c0c0c0" stroke="#000" stroke-width="1.200" transform="rotate(15 935.0 152.7)"/>
<polyline points="833.0,201.8 867.4,184.2" fill="none" stroke="#000" stroke-width="1" />
<ellipse shape-rendering="geometricPrecision" cx="1036.500" cy="526.600" rx="8.500" ry="11.500" fill="#4a4a4a" stroke="#000" transform="rotate(-25 1036.500 526.600)"/>
<ellipse shape-rendering="geometricPrecision" cx="1036.500" cy="526.600" rx="6.500" ry="9.500" fill="none" stroke="#d8d8d8" stroke-width="1.300" stroke-dasharray="2.500 2" transform="rotate(-25 1036.500 526.600)"/>
<polygon points="872.500,601 1027.500,520.800 1037.500,538 879.700,615.500" fill="url(#screw)" stroke="#000" stroke-width=".8"/>
<polygon points="872.500,601 1027.500,520.800 1037.500,538 879.700,615.500" fill="url(#screwsh)"/>
<path d="M820.5 611.9 L822.3 608.7 L825.5 606.4 L831.0 603.7 L837.4 602.3 L843.8 603.7 L848.3 606.4 L853.8 612.4 L857.4 618.3 L857.9 621.0 L852.0 623.8 L852.9 637.4 L841.9 637.4 L842.4 629.2 L837.4 622.8 L831.9 622.8 L821.9 627.6 L820.5 621.0 Z" fill="#11e811" stroke="#000" stroke-width=".9"/>
<path d="M857.9 620.6 L859.2 623.8 L859.2 637.4 L852.9 637.4 L852.0 623.8 Z" fill="#0aa00a" stroke="#000" stroke-width=".9"/>
<polyline points="825.5,607.4 831.0,606.9 837.4,608.3 842.8,611.5 846.5,615.6 850.1,620.1 852.0,623.8" fill="none" stroke="#000" stroke-width="0.9" />
<ellipse shape-rendering="geometricPrecision" cx="825.5" cy="613.7" rx="1.800" ry="2.700" fill="#0ac80a" stroke="#000" stroke-width=".8" transform="rotate(-20 825.5 613.7)"/>
<ellipse shape-rendering="geometricPrecision" cx="835.6" cy="611.9" rx="1.800" ry="2.700" fill="#0ac80a" stroke="#000" stroke-width=".8" transform="rotate(-20 835.6 611.9)"/>
<ellipse shape-rendering="geometricPrecision" cx="846.5" cy="621.5" rx="1.800" ry="2.700" fill="#0ac80a" stroke="#000" stroke-width=".8" transform="rotate(-20 846.5 621.5)"/>
<path d="M868.8 601.9 L873.8 604.6 L877.9 610.1 L879.3 617.4 L877.5 623.8 L870.2 628.8 Z" fill="url(#dome)" stroke="#000" stroke-width=".8"/>
<polygon points="803.7,639.2 831.9,623.8 837.4,622.8 841.0,626.5 842.4,629.2 841.9,639.2" fill="url(#screw)" stroke="#000" stroke-width=".8"/>
<g shape-rendering="geometricPrecision"><path d="M305.500 563V531" stroke="#6fd06f" stroke-width="2.500"/><path d="M305.500 524l-3 9h6z" fill="#5fc85f"/><path d="M306 564l28 9" stroke="#e06a6a" stroke-width="2.500"/><path d="M341 575.500l-9-0.500 2-5z" fill="#e06060"/><path d="M305 564l-22 11" stroke="#5a8ae0" stroke-width="2.500"/><path d="M276 578.500l6-6.500 3 5z" fill="#5a8ae0"/><circle shape-rendering="geometricPrecision" cx="305.500" cy="564" r="4" fill="#f2e070" stroke="#c8b040" stroke-width=".6"/><text x="301" y="521" font-family="Liberation Serif,serif" font-size="11" fill="#58c058">Y</text><text x="341" y="583" font-family="Liberation Serif,serif" font-size="11" fill="#e06060">X</text><text x="266" y="586" font-family="Liberation Serif,serif" font-size="11" fill="#5a8ae0">Z</text></g>
</g>
</svg>
<!-- splitter grips + message area -->
<div class="abs" style="left:27px;top:638px;width:1339px;height:72px;background:#e2e6ea"></div>
<div class="abs" style="left:27px;top:640px;width:1336px;height:1px;background:#f4f6f8"></div>
<div class="abs" style="left:27px;top:648px;width:2px;height:40px;background:repeating-linear-gradient(#b4bac2 0 2px,transparent 2px 4px)"></div>
<div class="abs" style="left:31px;top:649px;width:1330px;height:36px;background:linear-gradient(#fff 70%,#f3f3f3);border:1px solid #8e959e"></div>
<!-- status bar -->
<div class="abs" style="left:0;top:710px;width:1366px;height:18px;background:linear-gradient(#f3f4f5,#e4e6e9 40%,#cfd3d8);border-top:1px solid #9aa0a8"></div>
<div class="abs" style="left:1279px;top:711px;width:1px;height:16px;background:#8e949c;box-shadow:1px 0 0 #fff"></div>
<div class="abs" style="left:5px;top:713px;font-size:11.500px;letter-spacing:-.23px;color:#222;white-space:nowrap">Щелкните левой кнопкой мыши на объекте для его выделения (вместе с Ctrl - добавить к выделенным)</div>
<!-- windows taskbar -->
<div class="abs" style="left:0;top:728px;width:1366px;height:40px;background:linear-gradient(90deg,#8fa6c6 0,#a9c0de 60px,#a6bfdd 1060px,#8296b2 1110px,#8094b0 1366px);border-top:1px solid #5e6e84"></div>
<div class="abs" style="left:0;top:729px;width:1366px;height:1px;background:rgba(255,255,255,.45)"></div>
<style>
.tbb{position:absolute;top:730px;height:40px;width:59px;border:1px solid #6f83a0;border-radius:3px;background:linear-gradient(rgba(255,255,255,.55),rgba(255,255,255,.25) 45%,rgba(255,255,255,.05) 50%,rgba(255,255,255,.15));box-shadow:inset 0 0 0 1px rgba(255,255,255,.5)}
</style>
<div class="tbb" style="left:60px"></div>
<div class="tbb" style="left:184px"></div>
<div class="tbb" style="left:246px"></div>
<div class="tbb" style="left:308px"></div>
<div class="tbb" style="left:370px"></div>
<div class="tbb" style="left:436px;width:55px"></div>
<div class="tbb" style="left:434px;width:55px"></div>
<div class="tbb" style="left:432px;width:55px;background:linear-gradient(rgba(255,255,255,.8),rgba(255,255,255,.55) 45%,rgba(255,255,255,.35) 50%,rgba(255,255,255,.5))"></div>
<div class="tbb" style="left:494px"></div>
<!-- start orb -->
<svg style="left:6px;top:729px" width="42" height="39" viewBox="0 0 42 39">
<defs><radialGradient id="orb" cx=".5" cy=".35" r=".7"><stop offset="0" stop-color="#7fc4f4"/><stop offset=".55" stop-color="#2a6cb8"/><stop offset="1" stop-color="#123a78"/></radialGradient></defs>
<circle cx="21" cy="20" r="18.500" fill="url(#orb)" stroke="#2a4a78" stroke-width="1"/>
<ellipse cx="21" cy="11" rx="14" ry="8" fill="#fff" fill-opacity=".25"/>
<path d="M12 13c3-2 5-2 8 0l-1.500 7c-3-2-5-2-8 0z" fill="#f05a28"/>
<path d="M21.500 13.500c3 2 5 2 8 0l-1.500 7c-3 2-5 2-8 0z" fill="#8cc83c"/>
<path d="M10 21.500c3-2 5-2 8 0l-1.500 7c-3-2-5-2-8 0z" fill="#3c9ce8"/>
<path d="M19.500 22c3 2 5 2 8 0l-1.500 7c-3 2-5 2-8 0z" fill="#fcc41c"/>
</svg>
<!-- explorer -->
<svg style="left:73px;top:734px" width="32" height="32" viewBox="0 0 36 36">
<path d="M2 6h12l2 3h18v22h-32z" fill="#f2d270" stroke="#b89030" stroke-width=".8"/>
<path d="M2 11h32v20h-32z" fill="#f8e498" stroke="#c8a040" stroke-width=".8"/>
<path d="M4 15h28v16h-28z" fill="#fbeeb4"/>
<rect x="5" y="5" width="3" height="2" fill="#30a030"/><rect x="12" y="7" width="3" height="2" fill="#e03020"/><rect x="22" y="8" width="4" height="2" fill="#3080e0"/>
<path d="M7 36v-10q0-3 3-3h16q3 0 3 3v10h-5v-7h-12v7z" fill="#7fbfe8" stroke="#3878b0" stroke-width=".8"/>
<path d="M9 25h18" stroke="#d8f0ff" stroke-width="1.500"/>
</svg>
<!-- wmp -->
<svg style="left:137px;top:736px" width="28" height="28" viewBox="0 0 34 34">
<path d="M10 3h20v26h-20z" fill="#a8cdf0" stroke="#6898c8"/>
<path d="M7 5h20v26h-20z" fill="#c0dcf6" stroke="#6898c8"/>
<path d="M4 7h20v26h-20z" fill="#d8eafa" stroke="#6898c8" stroke-width=".8"/>
<circle cx="14" cy="19" r="9.500" fill="#f47c10" stroke="#fff" stroke-width="1.500"/>
<path d="M11 13.500v11l9-5.500z" fill="#fff"/>
</svg>
<!-- opera -->
<svg style="left:198px;top:733px" width="30" height="32" viewBox="0 0 34 36">
<ellipse cx="17" cy="18" rx="15.500" ry="17" fill="#e0141c"/>
<ellipse cx="17" cy="18" rx="7.500" ry="12.500" fill="#fff"/>
<path d="M17 1c8 0 15.500 7 15.500 17s-7.500 17-15.500 17c5 0 10-8 10-17s-5-17-10-17z" fill="#a80c14" fill-opacity=".45"/>
</svg>
<!-- utorrent -->
<svg style="left:259px;top:732px" width="32" height="32" viewBox="0 0 36 36">
<defs><radialGradient id="ut" cx=".4" cy=".3" r=".8"><stop offset="0" stop-color="#8cd048"/><stop offset="1" stop-color="#3c9420"/></radialGradient></defs>
<circle cx="18" cy="18" r="17" fill="url(#ut)"/>
<path d="M10 10h6v10c0 4 6 4 6 0v-10h6v12c0 4 1 5 3 5v4c-4 0-6-1-7-3-3 3-8 3-10 1v9h-4z" fill="#fff"/>
</svg>
<!-- red app -->
<svg style="left:322px;top:732px" width="31" height="31" viewBox="0 0 36 35">
<defs><linearGradient id="rd" x1="0" y1="0" x2="1" y2="1"><stop offset="0" stop-color="#e83038"/><stop offset="1" stop-color="#a00810"/></linearGradient></defs>
<rect x="2" y="2" width="32" height="32" rx="4" fill="url(#rd)" stroke="#c8a0a8" stroke-width="1.500"/>
<path d="M20 4c-8 4-12 14-10 24 4 4 12 4 16-1 1-8-1-17-5-22" fill="none" stroke="#fff" stroke-width="1.300"/>
</svg>
<!-- outlook -->
<svg style="left:383px;top:732px" width="32" height="32" viewBox="0 0 36 36">
<path d="M3 2h26v28h-26z" fill="#fbe8b0" stroke="#e8a020" stroke-width="1.300"/>
<path d="M8 10l24-2 1 18-22 3z" fill="#fff" stroke="#c8c8d0" stroke-width=".8"/>
<path d="M8 10l14 10 10-12" fill="none" stroke="#c0c0c8" stroke-width=".9"/>
<circle cx="19" cy="24" r="10" fill="#f8c428" stroke="#d89810" stroke-width="1"/>
<circle cx="19" cy="24" r="7.500" fill="#fce070"/>
<path d="M19 18v6l-5 3" fill="none" stroke="#a87800" stroke-width="1.300"/>
</svg>
<!-- kompas -->
<svg style="left:443px;top:732px" width="31" height="31" viewBox="0 0 34 34">
<circle cx="17" cy="17" r="14.500" fill="#e8f2ff" stroke="#1a68c8" stroke-width="4"/>
<path d="M11 4v27M11 18l14-12M14 15l12 14" stroke="#1a68c8" stroke-width="4.500" fill="none"/>
</svg>
<!-- paint -->
<svg style="left:506px;top:732px" width="35" height="32" viewBox="0 0 40 36">
<path d="M4 20c0-10 14-16 24-12 6 3 4 10-2 10-4 0-4 4-2 6 3 4-2 8-8 6-8-2-12-6-12-10z" fill="#e4eef8" stroke="#88a8c8" stroke-width="1"/>
<circle cx="11" cy="19" r="2.800" fill="#e03030"/><circle cx="16" cy="12" r="2.800" fill="#40b040"/><circle cx="24" cy="10" r="2.800" fill="#f0c020"/><circle cx="18" cy="25" r="2.500" fill="#5090e0"/>
<path d="M33 4l3 2-14 27-3 1z" fill="#e87818" stroke="#a85008" stroke-width=".6"/>
<path d="M33 0c3 1 5 4 4 7l-3-1-2-2z" fill="#d8a868" stroke="#906030" stroke-width=".6"/>
</svg>
<!-- tray -->
<div class="abs" style="left:1128px;top:739px;font-size:11.500px;color:#fff;letter-spacing:-.2px">RU</div>
<svg style="left:1155px;top:736px" width="120" height="24" viewBox="0 0 120 24">
<path d="M4 14l4-4.500 4 4.500z" fill="#fff"/>
<path d="M26.500 4v16" stroke="#fff" stroke-width="1.800"/><path d="M27.500 5c3-2 5 2 9 0v8c-4 2-6-2-9 0z" fill="#fff" stroke="#445" stroke-width=".6"/>
<circle cx="36" cy="15.500" r="4.300" fill="#e01818" stroke="#fff" stroke-width=".6"/><path d="M34 13.500l4 4M38 13.500l-4 4" stroke="#fff" stroke-width="1.400"/>
<path d="M51 6h4v-2h4v2h2v13h-10z" fill="#fff" stroke="#334" stroke-width=".8"/><path d="M55 9v-2M59 9v-2M53.500 9h7v3c0 2-2 3-2.500 3v3h-2v-3c-.5 0-2.500-1-2.500-3z" fill="#fff" stroke="#223" stroke-width=".9"/>
<path d="M74 17h2v2h-2zM78 14h2v5h-2zM82 11h2v8h-2zM86 7h2v12h-2zM90 5h.5" fill="#fff" stroke="#fff" stroke-width=".5"/><path d="M86.500 6h2v13h-2z" fill="#ccd" stroke="#fff" stroke-width=".5"/>
<path d="M99 10h3l4-4v13l-4-4h-3z" fill="#fff" stroke="#334" stroke-width=".6"/><path d="M108 9c1.500 2 1.500 5 0 7M110.500 7c2.500 3 2.500 8 0 11" fill="none" stroke="#fff" stroke-width="1.100"/>
</svg>
<div class="abs" style="left:1270px;top:734px;width:86px;text-align:center;font-size:11.500px;line-height:16px;color:#fff;letter-spacing:-.3px">23:04<br>24.11.2016</div>
<div class="abs" style="left:1352px;top:729px;width:14px;height:39px;background:linear-gradient(90deg,#6c7f9a,#56677e);border-left:1px solid #dfe6f0"></div>
</div>
</body>
</html>
